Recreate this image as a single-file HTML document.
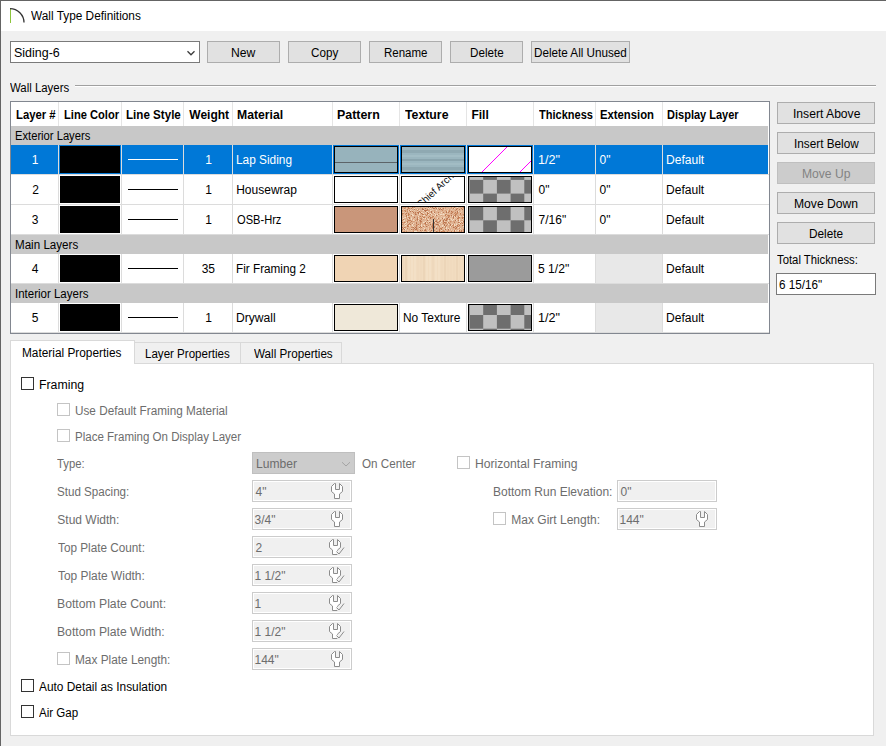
<!DOCTYPE html><html><head><meta charset="utf-8"><style>
*{box-sizing:border-box;margin:0;padding:0}
html,body{width:886px;height:746px;overflow:hidden;background:#f0f0f0;font-family:"Liberation Sans",sans-serif;font-size:12px;color:#000}
.a{position:absolute}
.t{position:absolute;white-space:nowrap;line-height:14px;transform-origin:0 0}
.b{font-weight:bold}
.btn{position:absolute;height:22px;background:#e1e1e1;border:1px solid #adadad}
.btn.dis{background:#cccccc;border-color:#bfbfbf}
.dis{color:#6d6d6d}
.dis2{color:#838383}
.w{color:#fff}
.cb{position:absolute;width:13px;height:13px;border:1px solid #333;background:#fff}
.cbd{position:absolute;width:13px;height:13px;border:1px solid #c4c4c4;background:#fff}
.tb{position:absolute;width:100px;height:22px;border:1px solid #cccccc;background:#f0f0f0;box-shadow:inset 0 0 0 1px #fff}
</style></head><body>
<div class="a" style="left:0px;top:0px;width:886px;height:31px;background:#fff;"></div>
<div class="a" style="left:0px;top:0px;width:886px;height:1px;background:#646464;"></div>
<div class="a" style="left:0px;top:0px;width:1px;height:746px;background:#646464;"></div>
<svg class="a" style="left:0;top:0" width="40" height="30"><line x1="10.5" y1="9" x2="10.5" y2="23" stroke="#8cc43c" stroke-width="1"/><path d="M10 8.6 A14 14 0 0 1 24 22.6" fill="none" stroke="#333" stroke-width="1.3"/></svg>
<div class="t " style="left:30.70px;top:9px;transform:scaleX(0.9865);">Wall Type Definitions</div>
<div class="a" style="left:10px;top:41px;width:190px;height:22px;background:#fff;border:1px solid #7a7a7a"></div>
<div class="t " style="left:14.46px;top:46px;transform:scaleX(1.0395);">Siding-6</div>
<svg class="a" style="left:186px;top:49px" width="12" height="8"><path d="M1.5 2.3 L5 5.8 L8.5 2.3" fill="none" stroke="#3a3a3a" stroke-width="1.25"/></svg>
<div class="btn" style="left:207px;top:41px;width:73px"></div>
<div class="t " style="left:231.19px;top:46px;transform:scaleX(1.0130);">New</div>
<div class="btn" style="left:288px;top:41px;width:73px"></div>
<div class="t " style="left:311.40px;top:46px;transform:scaleX(0.9714);">Copy</div>
<div class="btn" style="left:369px;top:41px;width:73px"></div>
<div class="t " style="left:384.34px;top:46px;transform:scaleX(0.9591);">Rename</div>
<div class="btn" style="left:450px;top:41px;width:73px"></div>
<div class="t " style="left:470.43px;top:46px;transform:scaleX(0.9697);">Delete</div>
<div class="btn" style="left:531px;top:41px;width:99px"></div>
<div class="t " style="left:534.43px;top:46px;transform:scaleX(0.9734);">Delete All Unused</div>
<div class="t " style="left:10.30px;top:81px;transform:scaleX(0.9500);">Wall Layers</div>
<div class="a" style="left:75px;top:85px;width:801px;height:1px;background:#a0a0a0;"></div>
<div class="a" style="left:75px;top:86px;width:801px;height:1px;background:#fff;"></div>
<div class="btn" style="left:777px;top:102px;width:98px"></div>
<div class="t " style="left:793.19px;top:107px;transform:scaleX(1.0108);">Insert Above</div>
<div class="btn" style="left:777px;top:132px;width:98px"></div>
<div class="t " style="left:793.82px;top:137px;transform:scaleX(0.9800);">Insert Below</div>
<div class="btn dis" style="left:777px;top:162px;width:98px"></div>
<div class="t dis2" style="left:802.19px;top:167px;transform:scaleX(1.0085);">Move Up</div>
<div class="btn" style="left:777px;top:192px;width:98px"></div>
<div class="t " style="left:794.29px;top:197px;transform:scaleX(1.0113);">Move Down</div>
<div class="btn" style="left:777px;top:222px;width:98px"></div>
<div class="t " style="left:809.22px;top:227px;transform:scaleX(0.9848);">Delete</div>
<div class="t " style="left:776.90px;top:253px;transform:scaleX(0.9424);">Total Thickness:</div>
<div class="a" style="left:776px;top:273px;width:100px;height:22px;background:#fff;border:1px solid #7a7a7a"></div>
<div class="t " style="left:779.30px;top:278px;transform:scaleX(0.9750);">6 15/16"</div>
<div class="a" style="left:10px;top:101px;width:760px;height:233px;background:#fff;border:1px solid #828790"></div>
<div class="t b" style="left:15.76px;top:108px;transform:scaleX(0.9439);">Layer #</div>
<div class="t b" style="left:63.57px;top:108px;transform:scaleX(0.9276);">Line Color</div>
<div class="t b" style="left:126.13px;top:108px;transform:scaleX(0.9673);">Line Style</div>
<div class="t b" style="left:189.30px;top:108px;">Weight</div>
<div class="t b" style="left:237.28px;top:108px;transform:scaleX(1.0182);">Material</div>
<div class="t b" style="left:336.96px;top:108px;transform:scaleX(1.0350);">Pattern</div>
<div class="t b" style="left:405.00px;top:108px;transform:scaleX(1.0238);">Texture</div>
<div class="t b" style="left:471.40px;top:108px;">Fill</div>
<div class="t b" style="left:538.80px;top:108px;transform:scaleX(0.9190);">Thickness</div>
<div class="t b" style="left:600.36px;top:108px;transform:scaleX(0.9411);">Extension</div>
<div class="t b" style="left:667.38px;top:108px;transform:scaleX(0.9182);">Display Layer</div>
<div class="a" style="left:58px;top:102px;width:1px;height:24px;background:#e5e5e5;"></div>
<div class="a" style="left:121px;top:102px;width:1px;height:24px;background:#e5e5e5;"></div>
<div class="a" style="left:183px;top:102px;width:1px;height:24px;background:#e5e5e5;"></div>
<div class="a" style="left:232px;top:102px;width:1px;height:24px;background:#e5e5e5;"></div>
<div class="a" style="left:332px;top:102px;width:1px;height:24px;background:#e5e5e5;"></div>
<div class="a" style="left:399px;top:102px;width:1px;height:24px;background:#e5e5e5;"></div>
<div class="a" style="left:466px;top:102px;width:1px;height:24px;background:#e5e5e5;"></div>
<div class="a" style="left:533px;top:102px;width:1px;height:24px;background:#e5e5e5;"></div>
<div class="a" style="left:595px;top:102px;width:1px;height:24px;background:#e5e5e5;"></div>
<div class="a" style="left:662px;top:102px;width:1px;height:24px;background:#e5e5e5;"></div>
<div class="a" style="left:11px;top:126px;width:757px;height:19px;background:#c8c8c8;"></div>
<div class="t " style="left:14.57px;top:129px;transform:scaleX(0.9325);">Exterior Layers</div>
<div class="a" style="left:11px;top:145px;width:757px;height:29px;background:#0078d7;"></div>
<div class="t w" style="left:31.70px;top:153px;">1</div>
<div class="a" style="left:60px;top:146px;width:60px;height:27px;background:#000;"></div>
<div class="a" style="left:128px;top:159px;width:50px;height:1px;background:#fff;"></div>
<div class="t w" style="left:205.20px;top:153px;">1</div>
<div class="t w" style="left:236.21px;top:153px;transform:scaleX(0.9873);">Lap Siding</div>
<div class="t w" style="left:537.55px;top:153px;transform:scaleX(1.0500);">1/2"</div>
<div class="t w" style="left:599.50px;top:153px;">0"</div>
<div class="t w" style="left:666.29px;top:153px;transform:scaleX(1.0054);">Default</div>
<div class="a" style="left:334px;top:146px;width:64px;height:27px;background:#000;"></div>
<div class="a" style="left:401px;top:146px;width:64px;height:27px;background:#000;"></div>
<div class="a" style="left:468px;top:146px;width:64px;height:27px;background:#000;"></div>
<div class="a" style="left:335px;top:147px;width:62px;height:25px;background:#97b3bc;"></div>
<div class="a" style="left:335px;top:162px;width:62px;height:1px;background:#5c6468;"></div>
<svg class="a" style="left:402px;top:147px" width="62" height="25"><rect width="62" height="25" fill="#9bb6bf"/><rect y="3" width="62" height="3" fill="#8fa9b2"/><rect y="12" width="62" height="2" fill="#8ba5ae"/><rect y="20" width="62" height="3" fill="#8ea8b1"/><rect y="8" width="62" height="2" fill="#a3bdc5"/><rect y="16" width="62" height="2" fill="#a2bcc4"/></svg>
<svg class="a" style="left:469px;top:147px" width="62" height="25"><rect width="62" height="25" fill="#fff"/><line x1="13" y1="25" x2="38" y2="0" stroke="#ff00ff" stroke-width="1"/><line x1="51" y1="25" x2="62" y2="14" stroke="#ff00ff" stroke-width="1"/></svg>
<div class="a" style="left:58px;top:145px;width:1px;height:30px;background:#dcdcdc;"></div>
<div class="a" style="left:121px;top:145px;width:1px;height:30px;background:#dcdcdc;"></div>
<div class="a" style="left:183px;top:145px;width:1px;height:30px;background:#dcdcdc;"></div>
<div class="a" style="left:232px;top:145px;width:1px;height:30px;background:#dcdcdc;"></div>
<div class="a" style="left:332px;top:145px;width:1px;height:30px;background:#dcdcdc;"></div>
<div class="a" style="left:399px;top:145px;width:1px;height:30px;background:#dcdcdc;"></div>
<div class="a" style="left:466px;top:145px;width:1px;height:30px;background:#dcdcdc;"></div>
<div class="a" style="left:533px;top:145px;width:1px;height:30px;background:#dcdcdc;"></div>
<div class="a" style="left:595px;top:145px;width:1px;height:30px;background:#dcdcdc;"></div>
<div class="a" style="left:662px;top:145px;width:1px;height:30px;background:#dcdcdc;"></div>
<div class="a" style="left:11px;top:174px;width:758px;height:1px;background:#dcdcdc;"></div>
<div class="t " style="left:32.20px;top:183px;">2</div>
<div class="a" style="left:60px;top:176px;width:60px;height:27px;background:#000;"></div>
<div class="a" style="left:128px;top:189px;width:50px;height:1px;background:#000;"></div>
<div class="t " style="left:205.20px;top:183px;">1</div>
<div class="t " style="left:236.20px;top:183px;">Housewrap</div>
<div class="t " style="left:538.60px;top:183px;">0"</div>
<div class="t " style="left:599.50px;top:183px;">0"</div>
<div class="t " style="left:666.29px;top:183px;transform:scaleX(1.0054);">Default</div>
<div class="a" style="left:334px;top:176px;width:64px;height:27px;background:#000;"></div>
<div class="a" style="left:401px;top:176px;width:64px;height:27px;background:#000;"></div>
<div class="a" style="left:468px;top:176px;width:64px;height:27px;background:#000;"></div>
<div class="a" style="left:335px;top:177px;width:62px;height:25px;background:#fff;"></div>
<svg class="a" style="left:402px;top:177px" width="62" height="25"><rect width="62" height="25" fill="#fff"/><text x="0" y="0" transform="translate(18.5 31.5) rotate(-43)" font-family="Liberation Sans" font-size="10" fill="#111">Chief Archit</text></svg>
<svg class="a" style="left:469px;top:177px" width="62" height="25"><rect width="62" height="25" fill="#c0c0c0"/><rect x="-26.90" y="-24.50" width="13.70" height="13.70" fill="#6e6e6e"/><rect x="0.50" y="-24.50" width="13.70" height="13.70" fill="#6e6e6e"/><rect x="27.90" y="-24.50" width="13.70" height="13.70" fill="#6e6e6e"/><rect x="55.30" y="-24.50" width="13.70" height="13.70" fill="#6e6e6e"/><rect x="82.70" y="-24.50" width="13.70" height="13.70" fill="#6e6e6e"/><rect x="-13.20" y="-10.80" width="13.70" height="13.70" fill="#6e6e6e"/><rect x="14.20" y="-10.80" width="13.70" height="13.70" fill="#6e6e6e"/><rect x="41.60" y="-10.80" width="13.70" height="13.70" fill="#6e6e6e"/><rect x="69.00" y="-10.80" width="13.70" height="13.70" fill="#6e6e6e"/><rect x="-26.90" y="2.90" width="13.70" height="13.70" fill="#6e6e6e"/><rect x="0.50" y="2.90" width="13.70" height="13.70" fill="#6e6e6e"/><rect x="27.90" y="2.90" width="13.70" height="13.70" fill="#6e6e6e"/><rect x="55.30" y="2.90" width="13.70" height="13.70" fill="#6e6e6e"/><rect x="82.70" y="2.90" width="13.70" height="13.70" fill="#6e6e6e"/><rect x="-13.20" y="16.60" width="13.70" height="13.70" fill="#6e6e6e"/><rect x="14.20" y="16.60" width="13.70" height="13.70" fill="#6e6e6e"/><rect x="41.60" y="16.60" width="13.70" height="13.70" fill="#6e6e6e"/><rect x="69.00" y="16.60" width="13.70" height="13.70" fill="#6e6e6e"/><rect x="-26.90" y="30.30" width="13.70" height="13.70" fill="#6e6e6e"/><rect x="0.50" y="30.30" width="13.70" height="13.70" fill="#6e6e6e"/><rect x="27.90" y="30.30" width="13.70" height="13.70" fill="#6e6e6e"/><rect x="55.30" y="30.30" width="13.70" height="13.70" fill="#6e6e6e"/><rect x="82.70" y="30.30" width="13.70" height="13.70" fill="#6e6e6e"/><rect x="-13.20" y="44.00" width="13.70" height="13.70" fill="#6e6e6e"/><rect x="14.20" y="44.00" width="13.70" height="13.70" fill="#6e6e6e"/><rect x="41.60" y="44.00" width="13.70" height="13.70" fill="#6e6e6e"/><rect x="69.00" y="44.00" width="13.70" height="13.70" fill="#6e6e6e"/><rect x="-26.90" y="57.70" width="13.70" height="13.70" fill="#6e6e6e"/><rect x="0.50" y="57.70" width="13.70" height="13.70" fill="#6e6e6e"/><rect x="27.90" y="57.70" width="13.70" height="13.70" fill="#6e6e6e"/><rect x="55.30" y="57.70" width="13.70" height="13.70" fill="#6e6e6e"/><rect x="82.70" y="57.70" width="13.70" height="13.70" fill="#6e6e6e"/></svg>
<div class="a" style="left:58px;top:175px;width:1px;height:30px;background:#dcdcdc;"></div>
<div class="a" style="left:121px;top:175px;width:1px;height:30px;background:#dcdcdc;"></div>
<div class="a" style="left:183px;top:175px;width:1px;height:30px;background:#dcdcdc;"></div>
<div class="a" style="left:232px;top:175px;width:1px;height:30px;background:#dcdcdc;"></div>
<div class="a" style="left:332px;top:175px;width:1px;height:30px;background:#dcdcdc;"></div>
<div class="a" style="left:399px;top:175px;width:1px;height:30px;background:#dcdcdc;"></div>
<div class="a" style="left:466px;top:175px;width:1px;height:30px;background:#dcdcdc;"></div>
<div class="a" style="left:533px;top:175px;width:1px;height:30px;background:#dcdcdc;"></div>
<div class="a" style="left:595px;top:175px;width:1px;height:30px;background:#dcdcdc;"></div>
<div class="a" style="left:662px;top:175px;width:1px;height:30px;background:#dcdcdc;"></div>
<div class="a" style="left:11px;top:204px;width:758px;height:1px;background:#dcdcdc;"></div>
<div class="t " style="left:31.70px;top:213px;">3</div>
<div class="a" style="left:60px;top:206px;width:60px;height:27px;background:#000;"></div>
<div class="a" style="left:128px;top:219px;width:50px;height:1px;background:#000;"></div>
<div class="t " style="left:205.20px;top:213px;">1</div>
<div class="t " style="left:237.20px;top:213px;transform:scaleX(0.9250);">OSB-Hrz</div>
<div class="t " style="left:538.60px;top:213px;">7/16"</div>
<div class="t " style="left:599.50px;top:213px;">0"</div>
<div class="t " style="left:666.29px;top:213px;transform:scaleX(1.0054);">Default</div>
<div class="a" style="left:334px;top:206px;width:64px;height:27px;background:#000;"></div>
<div class="a" style="left:401px;top:206px;width:64px;height:27px;background:#000;"></div>
<div class="a" style="left:468px;top:206px;width:64px;height:27px;background:#000;"></div>
<div class="a" style="left:335px;top:207px;width:62px;height:25px;background:#c9967a;"></div>
<svg class="a" style="left:402px;top:207px" width="62" height="25"><rect width="62" height="25" fill="#dfb393"/><rect x="0" y="0" width="1" height="1" fill="#d8a07c"/><rect x="1" y="0" width="1" height="1" fill="#d8a07c"/><rect x="2" y="0" width="1" height="1" fill="#d8a07c"/><rect x="3" y="0" width="1" height="1" fill="#cc8c64"/><rect x="5" y="0" width="1" height="1" fill="#d8a07c"/><rect x="6" y="0" width="1" height="1" fill="#b87250"/><rect x="7" y="0" width="1" height="1" fill="#e6bc9c"/><rect x="9" y="0" width="1" height="1" fill="#e6bc9c"/><rect x="10" y="0" width="1" height="1" fill="#b87250"/><rect x="11" y="0" width="1" height="1" fill="#d8a07c"/><rect x="12" y="0" width="1" height="1" fill="#cc8c64"/><rect x="14" y="0" width="1" height="1" fill="#e6bc9c"/><rect x="16" y="0" width="1" height="1" fill="#e6bc9c"/><rect x="17" y="0" width="1" height="1" fill="#e6bc9c"/><rect x="18" y="0" width="1" height="1" fill="#d8a07c"/><rect x="23" y="0" width="1" height="1" fill="#e6bc9c"/><rect x="26" y="0" width="1" height="1" fill="#c27c54"/><rect x="27" y="0" width="1" height="1" fill="#ebcaac"/><rect x="28" y="0" width="1" height="1" fill="#c27c54"/><rect x="30" y="0" width="1" height="1" fill="#b87250"/><rect x="32" y="0" width="1" height="1" fill="#e6bc9c"/><rect x="33" y="0" width="1" height="1" fill="#c27c54"/><rect x="35" y="0" width="1" height="1" fill="#ebcaac"/><rect x="42" y="0" width="1" height="1" fill="#e6bc9c"/><rect x="43" y="0" width="1" height="1" fill="#d8a07c"/><rect x="47" y="0" width="1" height="1" fill="#e6bc9c"/><rect x="49" y="0" width="1" height="1" fill="#cc8c64"/><rect x="50" y="0" width="1" height="1" fill="#e6bc9c"/><rect x="52" y="0" width="1" height="1" fill="#c27c54"/><rect x="54" y="0" width="1" height="1" fill="#ebcaac"/><rect x="55" y="0" width="1" height="1" fill="#f2dcc4"/><rect x="58" y="0" width="1" height="1" fill="#d8a07c"/><rect x="60" y="0" width="1" height="1" fill="#d8a07c"/><rect x="61" y="0" width="1" height="1" fill="#c27c54"/><rect x="2" y="1" width="1" height="1" fill="#cc8c64"/><rect x="3" y="1" width="1" height="1" fill="#d8a07c"/><rect x="4" y="1" width="1" height="1" fill="#ebcaac"/><rect x="6" y="1" width="1" height="1" fill="#c27c54"/><rect x="7" y="1" width="1" height="1" fill="#cc8c64"/><rect x="9" y="1" width="1" height="1" fill="#c27c54"/><rect x="12" y="1" width="1" height="1" fill="#f2dcc4"/><rect x="14" y="1" width="1" height="1" fill="#e6bc9c"/><rect x="20" y="1" width="1" height="1" fill="#b87250"/><rect x="23" y="1" width="1" height="1" fill="#c27c54"/><rect x="26" y="1" width="1" height="1" fill="#f2dcc4"/><rect x="28" y="1" width="1" height="1" fill="#f2dcc4"/><rect x="31" y="1" width="1" height="1" fill="#b87250"/><rect x="32" y="1" width="1" height="1" fill="#c27c54"/><rect x="34" y="1" width="1" height="1" fill="#b87250"/><rect x="35" y="1" width="1" height="1" fill="#f2dcc4"/><rect x="36" y="1" width="1" height="1" fill="#cc8c64"/><rect x="38" y="1" width="1" height="1" fill="#c27c54"/><rect x="39" y="1" width="1" height="1" fill="#f2dcc4"/><rect x="40" y="1" width="1" height="1" fill="#d8a07c"/><rect x="41" y="1" width="1" height="1" fill="#c27c54"/><rect x="42" y="1" width="1" height="1" fill="#e6bc9c"/><rect x="43" y="1" width="1" height="1" fill="#d8a07c"/><rect x="44" y="1" width="1" height="1" fill="#e6bc9c"/><rect x="45" y="1" width="1" height="1" fill="#e6bc9c"/><rect x="49" y="1" width="1" height="1" fill="#d8a07c"/><rect x="50" y="1" width="1" height="1" fill="#e6bc9c"/><rect x="51" y="1" width="1" height="1" fill="#c27c54"/><rect x="52" y="1" width="1" height="1" fill="#f2dcc4"/><rect x="54" y="1" width="1" height="1" fill="#d8a07c"/><rect x="55" y="1" width="1" height="1" fill="#c27c54"/><rect x="57" y="1" width="1" height="1" fill="#e6bc9c"/><rect x="59" y="1" width="1" height="1" fill="#c27c54"/><rect x="61" y="1" width="1" height="1" fill="#d8a07c"/><rect x="0" y="2" width="1" height="1" fill="#ebcaac"/><rect x="2" y="2" width="1" height="1" fill="#ebcaac"/><rect x="3" y="2" width="1" height="1" fill="#e6bc9c"/><rect x="5" y="2" width="1" height="1" fill="#c27c54"/><rect x="6" y="2" width="1" height="1" fill="#e6bc9c"/><rect x="9" y="2" width="1" height="1" fill="#ebcaac"/><rect x="10" y="2" width="1" height="1" fill="#d8a07c"/><rect x="12" y="2" width="1" height="1" fill="#c27c54"/><rect x="14" y="2" width="1" height="1" fill="#d8a07c"/><rect x="15" y="2" width="1" height="1" fill="#f2dcc4"/><rect x="16" y="2" width="1" height="1" fill="#cc8c64"/><rect x="17" y="2" width="1" height="1" fill="#e6bc9c"/><rect x="20" y="2" width="1" height="1" fill="#b87250"/><rect x="21" y="2" width="1" height="1" fill="#b87250"/><rect x="22" y="2" width="1" height="1" fill="#e6bc9c"/><rect x="25" y="2" width="1" height="1" fill="#c27c54"/><rect x="30" y="2" width="1" height="1" fill="#ebcaac"/><rect x="31" y="2" width="1" height="1" fill="#e6bc9c"/><rect x="37" y="2" width="1" height="1" fill="#b87250"/><rect x="38" y="2" width="1" height="1" fill="#d8a07c"/><rect x="39" y="2" width="1" height="1" fill="#b87250"/><rect x="40" y="2" width="1" height="1" fill="#d8a07c"/><rect x="41" y="2" width="1" height="1" fill="#d8a07c"/><rect x="42" y="2" width="1" height="1" fill="#ebcaac"/><rect x="43" y="2" width="1" height="1" fill="#e6bc9c"/><rect x="46" y="2" width="1" height="1" fill="#ebcaac"/><rect x="47" y="2" width="1" height="1" fill="#d8a07c"/><rect x="49" y="2" width="1" height="1" fill="#ebcaac"/><rect x="54" y="2" width="1" height="1" fill="#b87250"/><rect x="56" y="2" width="1" height="1" fill="#e6bc9c"/><rect x="57" y="2" width="1" height="1" fill="#c27c54"/><rect x="60" y="2" width="1" height="1" fill="#c27c54"/><rect x="0" y="3" width="1" height="1" fill="#cc8c64"/><rect x="2" y="3" width="1" height="1" fill="#cc8c64"/><rect x="3" y="3" width="1" height="1" fill="#cc8c64"/><rect x="5" y="3" width="1" height="1" fill="#d8a07c"/><rect x="6" y="3" width="1" height="1" fill="#ebcaac"/><rect x="7" y="3" width="1" height="1" fill="#c27c54"/><rect x="8" y="3" width="1" height="1" fill="#f2dcc4"/><rect x="10" y="3" width="1" height="1" fill="#ebcaac"/><rect x="12" y="3" width="1" height="1" fill="#ebcaac"/><rect x="15" y="3" width="1" height="1" fill="#cc8c64"/><rect x="17" y="3" width="1" height="1" fill="#f2dcc4"/><rect x="20" y="3" width="1" height="1" fill="#e6bc9c"/><rect x="21" y="3" width="1" height="1" fill="#f2dcc4"/><rect x="22" y="3" width="1" height="1" fill="#b87250"/><rect x="23" y="3" width="1" height="1" fill="#b87250"/><rect x="24" y="3" width="1" height="1" fill="#b87250"/><rect x="25" y="3" width="1" height="1" fill="#cc8c64"/><rect x="26" y="3" width="1" height="1" fill="#d8a07c"/><rect x="27" y="3" width="1" height="1" fill="#d8a07c"/><rect x="28" y="3" width="1" height="1" fill="#f2dcc4"/><rect x="29" y="3" width="1" height="1" fill="#ebcaac"/><rect x="32" y="3" width="1" height="1" fill="#d8a07c"/><rect x="34" y="3" width="1" height="1" fill="#f2dcc4"/><rect x="40" y="3" width="1" height="1" fill="#cc8c64"/><rect x="43" y="3" width="1" height="1" fill="#d8a07c"/><rect x="45" y="3" width="1" height="1" fill="#ebcaac"/><rect x="47" y="3" width="1" height="1" fill="#cc8c64"/><rect x="50" y="3" width="1" height="1" fill="#e6bc9c"/><rect x="51" y="3" width="1" height="1" fill="#e6bc9c"/><rect x="53" y="3" width="1" height="1" fill="#cc8c64"/><rect x="59" y="3" width="1" height="1" fill="#e6bc9c"/><rect x="0" y="4" width="1" height="1" fill="#d8a07c"/><rect x="3" y="4" width="1" height="1" fill="#c27c54"/><rect x="5" y="4" width="1" height="1" fill="#cc8c64"/><rect x="6" y="4" width="1" height="1" fill="#ebcaac"/><rect x="8" y="4" width="1" height="1" fill="#b87250"/><rect x="10" y="4" width="1" height="1" fill="#c27c54"/><rect x="15" y="4" width="1" height="1" fill="#ebcaac"/><rect x="17" y="4" width="1" height="1" fill="#b87250"/><rect x="19" y="4" width="1" height="1" fill="#d8a07c"/><rect x="23" y="4" width="1" height="1" fill="#b87250"/><rect x="24" y="4" width="1" height="1" fill="#ebcaac"/><rect x="25" y="4" width="1" height="1" fill="#f2dcc4"/><rect x="29" y="4" width="1" height="1" fill="#b87250"/><rect x="31" y="4" width="1" height="1" fill="#e6bc9c"/><rect x="32" y="4" width="1" height="1" fill="#d8a07c"/><rect x="44" y="4" width="1" height="1" fill="#c27c54"/><rect x="45" y="4" width="1" height="1" fill="#f2dcc4"/><rect x="46" y="4" width="1" height="1" fill="#d8a07c"/><rect x="47" y="4" width="1" height="1" fill="#c27c54"/><rect x="48" y="4" width="1" height="1" fill="#e6bc9c"/><rect x="49" y="4" width="1" height="1" fill="#b87250"/><rect x="50" y="4" width="1" height="1" fill="#d8a07c"/><rect x="51" y="4" width="1" height="1" fill="#d8a07c"/><rect x="55" y="4" width="1" height="1" fill="#b87250"/><rect x="56" y="4" width="1" height="1" fill="#f2dcc4"/><rect x="59" y="4" width="1" height="1" fill="#ebcaac"/><rect x="1" y="5" width="1" height="1" fill="#ebcaac"/><rect x="3" y="5" width="1" height="1" fill="#ebcaac"/><rect x="5" y="5" width="1" height="1" fill="#d8a07c"/><rect x="9" y="5" width="1" height="1" fill="#e6bc9c"/><rect x="10" y="5" width="1" height="1" fill="#ebcaac"/><rect x="11" y="5" width="1" height="1" fill="#b87250"/><rect x="13" y="5" width="1" height="1" fill="#c27c54"/><rect x="15" y="5" width="1" height="1" fill="#c27c54"/><rect x="16" y="5" width="1" height="1" fill="#b87250"/><rect x="18" y="5" width="1" height="1" fill="#c27c54"/><rect x="19" y="5" width="1" height="1" fill="#f2dcc4"/><rect x="20" y="5" width="1" height="1" fill="#ebcaac"/><rect x="23" y="5" width="1" height="1" fill="#ebcaac"/><rect x="25" y="5" width="1" height="1" fill="#c27c54"/><rect x="26" y="5" width="1" height="1" fill="#f2dcc4"/><rect x="27" y="5" width="1" height="1" fill="#d8a07c"/><rect x="29" y="5" width="1" height="1" fill="#b87250"/><rect x="30" y="5" width="1" height="1" fill="#e6bc9c"/><rect x="31" y="5" width="1" height="1" fill="#f2dcc4"/><rect x="32" y="5" width="1" height="1" fill="#b87250"/><rect x="36" y="5" width="1" height="1" fill="#c27c54"/><rect x="39" y="5" width="1" height="1" fill="#f2dcc4"/><rect x="41" y="5" width="1" height="1" fill="#c27c54"/><rect x="44" y="5" width="1" height="1" fill="#b87250"/><rect x="46" y="5" width="1" height="1" fill="#c27c54"/><rect x="49" y="5" width="1" height="1" fill="#d8a07c"/><rect x="50" y="5" width="1" height="1" fill="#c27c54"/><rect x="53" y="5" width="1" height="1" fill="#c27c54"/><rect x="55" y="5" width="1" height="1" fill="#c27c54"/><rect x="58" y="5" width="1" height="1" fill="#ebcaac"/><rect x="0" y="6" width="1" height="1" fill="#c27c54"/><rect x="1" y="6" width="1" height="1" fill="#cc8c64"/><rect x="3" y="6" width="1" height="1" fill="#d8a07c"/><rect x="4" y="6" width="1" height="1" fill="#b87250"/><rect x="6" y="6" width="1" height="1" fill="#c27c54"/><rect x="8" y="6" width="1" height="1" fill="#e6bc9c"/><rect x="10" y="6" width="1" height="1" fill="#e6bc9c"/><rect x="12" y="6" width="1" height="1" fill="#d8a07c"/><rect x="13" y="6" width="1" height="1" fill="#cc8c64"/><rect x="16" y="6" width="1" height="1" fill="#b87250"/><rect x="17" y="6" width="1" height="1" fill="#f2dcc4"/><rect x="19" y="6" width="1" height="1" fill="#b87250"/><rect x="20" y="6" width="1" height="1" fill="#d8a07c"/><rect x="21" y="6" width="1" height="1" fill="#f2dcc4"/><rect x="24" y="6" width="1" height="1" fill="#ebcaac"/><rect x="25" y="6" width="1" height="1" fill="#c27c54"/><rect x="26" y="6" width="1" height="1" fill="#c27c54"/><rect x="27" y="6" width="1" height="1" fill="#e6bc9c"/><rect x="28" y="6" width="1" height="1" fill="#f2dcc4"/><rect x="30" y="6" width="1" height="1" fill="#d8a07c"/><rect x="32" y="6" width="1" height="1" fill="#f2dcc4"/><rect x="35" y="6" width="1" height="1" fill="#e6bc9c"/><rect x="37" y="6" width="1" height="1" fill="#ebcaac"/><rect x="39" y="6" width="1" height="1" fill="#e6bc9c"/><rect x="41" y="6" width="1" height="1" fill="#ebcaac"/><rect x="43" y="6" width="1" height="1" fill="#ebcaac"/><rect x="45" y="6" width="1" height="1" fill="#e6bc9c"/><rect x="48" y="6" width="1" height="1" fill="#d8a07c"/><rect x="49" y="6" width="1" height="1" fill="#b87250"/><rect x="51" y="6" width="1" height="1" fill="#e6bc9c"/><rect x="52" y="6" width="1" height="1" fill="#cc8c64"/><rect x="53" y="6" width="1" height="1" fill="#d8a07c"/><rect x="54" y="6" width="1" height="1" fill="#cc8c64"/><rect x="55" y="6" width="1" height="1" fill="#cc8c64"/><rect x="57" y="6" width="1" height="1" fill="#e6bc9c"/><rect x="58" y="6" width="1" height="1" fill="#b87250"/><rect x="59" y="6" width="1" height="1" fill="#e6bc9c"/><rect x="0" y="7" width="1" height="1" fill="#cc8c64"/><rect x="2" y="7" width="1" height="1" fill="#e6bc9c"/><rect x="3" y="7" width="1" height="1" fill="#cc8c64"/><rect x="5" y="7" width="1" height="1" fill="#e6bc9c"/><rect x="6" y="7" width="1" height="1" fill="#c27c54"/><rect x="7" y="7" width="1" height="1" fill="#cc8c64"/><rect x="8" y="7" width="1" height="1" fill="#e6bc9c"/><rect x="9" y="7" width="1" height="1" fill="#ebcaac"/><rect x="10" y="7" width="1" height="1" fill="#f2dcc4"/><rect x="13" y="7" width="1" height="1" fill="#b87250"/><rect x="14" y="7" width="1" height="1" fill="#cc8c64"/><rect x="15" y="7" width="1" height="1" fill="#e6bc9c"/><rect x="17" y="7" width="1" height="1" fill="#f2dcc4"/><rect x="20" y="7" width="1" height="1" fill="#c27c54"/><rect x="21" y="7" width="1" height="1" fill="#c27c54"/><rect x="23" y="7" width="1" height="1" fill="#cc8c64"/><rect x="25" y="7" width="1" height="1" fill="#c27c54"/><rect x="26" y="7" width="1" height="1" fill="#f2dcc4"/><rect x="28" y="7" width="1" height="1" fill="#cc8c64"/><rect x="29" y="7" width="1" height="1" fill="#f2dcc4"/><rect x="32" y="7" width="1" height="1" fill="#d8a07c"/><rect x="33" y="7" width="1" height="1" fill="#f2dcc4"/><rect x="34" y="7" width="1" height="1" fill="#e6bc9c"/><rect x="35" y="7" width="1" height="1" fill="#f2dcc4"/><rect x="36" y="7" width="1" height="1" fill="#cc8c64"/><rect x="38" y="7" width="1" height="1" fill="#f2dcc4"/><rect x="39" y="7" width="1" height="1" fill="#f2dcc4"/><rect x="40" y="7" width="1" height="1" fill="#ebcaac"/><rect x="41" y="7" width="1" height="1" fill="#f2dcc4"/><rect x="42" y="7" width="1" height="1" fill="#ebcaac"/><rect x="43" y="7" width="1" height="1" fill="#cc8c64"/><rect x="44" y="7" width="1" height="1" fill="#cc8c64"/><rect x="47" y="7" width="1" height="1" fill="#e6bc9c"/><rect x="51" y="7" width="1" height="1" fill="#d8a07c"/><rect x="52" y="7" width="1" height="1" fill="#e6bc9c"/><rect x="53" y="7" width="1" height="1" fill="#c27c54"/><rect x="54" y="7" width="1" height="1" fill="#cc8c64"/><rect x="58" y="7" width="1" height="1" fill="#cc8c64"/><rect x="60" y="7" width="1" height="1" fill="#d8a07c"/><rect x="61" y="7" width="1" height="1" fill="#cc8c64"/><rect x="0" y="8" width="1" height="1" fill="#d8a07c"/><rect x="2" y="8" width="1" height="1" fill="#e6bc9c"/><rect x="3" y="8" width="1" height="1" fill="#e6bc9c"/><rect x="4" y="8" width="1" height="1" fill="#c27c54"/><rect x="6" y="8" width="1" height="1" fill="#c27c54"/><rect x="9" y="8" width="1" height="1" fill="#c27c54"/><rect x="10" y="8" width="1" height="1" fill="#f2dcc4"/><rect x="11" y="8" width="1" height="1" fill="#f2dcc4"/><rect x="15" y="8" width="1" height="1" fill="#e6bc9c"/><rect x="21" y="8" width="1" height="1" fill="#f2dcc4"/><rect x="22" y="8" width="1" height="1" fill="#f2dcc4"/><rect x="24" y="8" width="1" height="1" fill="#c27c54"/><rect x="31" y="8" width="1" height="1" fill="#ebcaac"/><rect x="33" y="8" width="1" height="1" fill="#f2dcc4"/><rect x="34" y="8" width="1" height="1" fill="#b87250"/><rect x="36" y="8" width="1" height="1" fill="#ebcaac"/><rect x="39" y="8" width="1" height="1" fill="#d8a07c"/><rect x="41" y="8" width="1" height="1" fill="#e6bc9c"/><rect x="43" y="8" width="1" height="1" fill="#c27c54"/><rect x="44" y="8" width="1" height="1" fill="#ebcaac"/><rect x="45" y="8" width="1" height="1" fill="#cc8c64"/><rect x="46" y="8" width="1" height="1" fill="#c27c54"/><rect x="47" y="8" width="1" height="1" fill="#cc8c64"/><rect x="49" y="8" width="1" height="1" fill="#b87250"/><rect x="50" y="8" width="1" height="1" fill="#ebcaac"/><rect x="52" y="8" width="1" height="1" fill="#cc8c64"/><rect x="53" y="8" width="1" height="1" fill="#c27c54"/><rect x="55" y="8" width="1" height="1" fill="#d8a07c"/><rect x="59" y="8" width="1" height="1" fill="#d8a07c"/><rect x="61" y="8" width="1" height="1" fill="#d8a07c"/><rect x="0" y="9" width="1" height="1" fill="#e6bc9c"/><rect x="4" y="9" width="1" height="1" fill="#c27c54"/><rect x="5" y="9" width="1" height="1" fill="#f2dcc4"/><rect x="6" y="9" width="1" height="1" fill="#e6bc9c"/><rect x="12" y="9" width="1" height="1" fill="#d8a07c"/><rect x="15" y="9" width="1" height="1" fill="#d8a07c"/><rect x="16" y="9" width="1" height="1" fill="#f2dcc4"/><rect x="17" y="9" width="1" height="1" fill="#d8a07c"/><rect x="18" y="9" width="1" height="1" fill="#c27c54"/><rect x="20" y="9" width="1" height="1" fill="#c27c54"/><rect x="21" y="9" width="1" height="1" fill="#e6bc9c"/><rect x="22" y="9" width="1" height="1" fill="#d8a07c"/><rect x="24" y="9" width="1" height="1" fill="#e6bc9c"/><rect x="27" y="9" width="1" height="1" fill="#c27c54"/><rect x="29" y="9" width="1" height="1" fill="#ebcaac"/><rect x="30" y="9" width="1" height="1" fill="#cc8c64"/><rect x="31" y="9" width="1" height="1" fill="#c27c54"/><rect x="32" y="9" width="1" height="1" fill="#ebcaac"/><rect x="39" y="9" width="1" height="1" fill="#ebcaac"/><rect x="42" y="9" width="1" height="1" fill="#e6bc9c"/><rect x="44" y="9" width="1" height="1" fill="#d8a07c"/><rect x="46" y="9" width="1" height="1" fill="#cc8c64"/><rect x="47" y="9" width="1" height="1" fill="#cc8c64"/><rect x="48" y="9" width="1" height="1" fill="#ebcaac"/><rect x="49" y="9" width="1" height="1" fill="#d8a07c"/><rect x="50" y="9" width="1" height="1" fill="#f2dcc4"/><rect x="51" y="9" width="1" height="1" fill="#b87250"/><rect x="52" y="9" width="1" height="1" fill="#f2dcc4"/><rect x="53" y="9" width="1" height="1" fill="#c27c54"/><rect x="54" y="9" width="1" height="1" fill="#ebcaac"/><rect x="56" y="9" width="1" height="1" fill="#cc8c64"/><rect x="57" y="9" width="1" height="1" fill="#f2dcc4"/><rect x="58" y="9" width="1" height="1" fill="#ebcaac"/><rect x="59" y="9" width="1" height="1" fill="#e6bc9c"/><rect x="61" y="9" width="1" height="1" fill="#f2dcc4"/><rect x="2" y="10" width="1" height="1" fill="#ebcaac"/><rect x="3" y="10" width="1" height="1" fill="#f2dcc4"/><rect x="4" y="10" width="1" height="1" fill="#d8a07c"/><rect x="5" y="10" width="1" height="1" fill="#e6bc9c"/><rect x="6" y="10" width="1" height="1" fill="#cc8c64"/><rect x="7" y="10" width="1" height="1" fill="#c27c54"/><rect x="9" y="10" width="1" height="1" fill="#ebcaac"/><rect x="12" y="10" width="1" height="1" fill="#b87250"/><rect x="15" y="10" width="1" height="1" fill="#cc8c64"/><rect x="16" y="10" width="1" height="1" fill="#e6bc9c"/><rect x="18" y="10" width="1" height="1" fill="#e6bc9c"/><rect x="19" y="10" width="1" height="1" fill="#d8a07c"/><rect x="20" y="10" width="1" height="1" fill="#ebcaac"/><rect x="21" y="10" width="1" height="1" fill="#c27c54"/><rect x="22" y="10" width="1" height="1" fill="#c27c54"/><rect x="26" y="10" width="1" height="1" fill="#c27c54"/><rect x="27" y="10" width="1" height="1" fill="#e6bc9c"/><rect x="28" y="10" width="1" height="1" fill="#b87250"/><rect x="29" y="10" width="1" height="1" fill="#cc8c64"/><rect x="30" y="10" width="1" height="1" fill="#cc8c64"/><rect x="35" y="10" width="1" height="1" fill="#ebcaac"/><rect x="38" y="10" width="1" height="1" fill="#e6bc9c"/><rect x="41" y="10" width="1" height="1" fill="#ebcaac"/><rect x="42" y="10" width="1" height="1" fill="#f2dcc4"/><rect x="46" y="10" width="1" height="1" fill="#b87250"/><rect x="51" y="10" width="1" height="1" fill="#b87250"/><rect x="52" y="10" width="1" height="1" fill="#ebcaac"/><rect x="53" y="10" width="1" height="1" fill="#ebcaac"/><rect x="56" y="10" width="1" height="1" fill="#c27c54"/><rect x="57" y="10" width="1" height="1" fill="#c27c54"/><rect x="59" y="10" width="1" height="1" fill="#d8a07c"/><rect x="60" y="10" width="1" height="1" fill="#c27c54"/><rect x="61" y="10" width="1" height="1" fill="#cc8c64"/><rect x="0" y="11" width="1" height="1" fill="#e6bc9c"/><rect x="1" y="11" width="1" height="1" fill="#f2dcc4"/><rect x="4" y="11" width="1" height="1" fill="#d8a07c"/><rect x="6" y="11" width="1" height="1" fill="#ebcaac"/><rect x="7" y="11" width="1" height="1" fill="#b87250"/><rect x="9" y="11" width="1" height="1" fill="#f2dcc4"/><rect x="11" y="11" width="1" height="1" fill="#d8a07c"/><rect x="12" y="11" width="1" height="1" fill="#e6bc9c"/><rect x="15" y="11" width="1" height="1" fill="#c27c54"/><rect x="16" y="11" width="1" height="1" fill="#f2dcc4"/><rect x="18" y="11" width="1" height="1" fill="#cc8c64"/><rect x="19" y="11" width="1" height="1" fill="#cc8c64"/><rect x="21" y="11" width="1" height="1" fill="#f2dcc4"/><rect x="23" y="11" width="1" height="1" fill="#f2dcc4"/><rect x="24" y="11" width="1" height="1" fill="#cc8c64"/><rect x="25" y="11" width="1" height="1" fill="#ebcaac"/><rect x="28" y="11" width="1" height="1" fill="#b87250"/><rect x="32" y="11" width="1" height="1" fill="#c27c54"/><rect x="35" y="11" width="1" height="1" fill="#f2dcc4"/><rect x="36" y="11" width="1" height="1" fill="#c27c54"/><rect x="38" y="11" width="1" height="1" fill="#ebcaac"/><rect x="39" y="11" width="1" height="1" fill="#ebcaac"/><rect x="40" y="11" width="1" height="1" fill="#b87250"/><rect x="41" y="11" width="1" height="1" fill="#f2dcc4"/><rect x="44" y="11" width="1" height="1" fill="#cc8c64"/><rect x="45" y="11" width="1" height="1" fill="#b87250"/><rect x="46" y="11" width="1" height="1" fill="#ebcaac"/><rect x="48" y="11" width="1" height="1" fill="#ebcaac"/><rect x="49" y="11" width="1" height="1" fill="#ebcaac"/><rect x="51" y="11" width="1" height="1" fill="#cc8c64"/><rect x="52" y="11" width="1" height="1" fill="#ebcaac"/><rect x="54" y="11" width="1" height="1" fill="#ebcaac"/><rect x="55" y="11" width="1" height="1" fill="#c27c54"/><rect x="56" y="11" width="1" height="1" fill="#c27c54"/><rect x="60" y="11" width="1" height="1" fill="#c27c54"/><rect x="1" y="12" width="1" height="1" fill="#c27c54"/><rect x="4" y="12" width="1" height="1" fill="#e6bc9c"/><rect x="5" y="12" width="1" height="1" fill="#cc8c64"/><rect x="9" y="12" width="1" height="1" fill="#f2dcc4"/><rect x="10" y="12" width="1" height="1" fill="#d8a07c"/><rect x="11" y="12" width="1" height="1" fill="#ebcaac"/><rect x="14" y="12" width="1" height="1" fill="#d8a07c"/><rect x="15" y="12" width="1" height="1" fill="#b87250"/><rect x="17" y="12" width="1" height="1" fill="#e6bc9c"/><rect x="19" y="12" width="1" height="1" fill="#c27c54"/><rect x="21" y="12" width="1" height="1" fill="#d8a07c"/><rect x="23" y="12" width="1" height="1" fill="#e6bc9c"/><rect x="24" y="12" width="1" height="1" fill="#d8a07c"/><rect x="25" y="12" width="1" height="1" fill="#e6bc9c"/><rect x="26" y="12" width="1" height="1" fill="#f2dcc4"/><rect x="31" y="12" width="1" height="1" fill="#d8a07c"/><rect x="33" y="12" width="1" height="1" fill="#d8a07c"/><rect x="35" y="12" width="1" height="1" fill="#d8a07c"/><rect x="42" y="12" width="1" height="1" fill="#b87250"/><rect x="44" y="12" width="1" height="1" fill="#c27c54"/><rect x="45" y="12" width="1" height="1" fill="#cc8c64"/><rect x="47" y="12" width="1" height="1" fill="#c27c54"/><rect x="49" y="12" width="1" height="1" fill="#f2dcc4"/><rect x="51" y="12" width="1" height="1" fill="#f2dcc4"/><rect x="52" y="12" width="1" height="1" fill="#e6bc9c"/><rect x="56" y="12" width="1" height="1" fill="#d8a07c"/><rect x="57" y="12" width="1" height="1" fill="#f2dcc4"/><rect x="58" y="12" width="1" height="1" fill="#e6bc9c"/><rect x="60" y="12" width="1" height="1" fill="#ebcaac"/><rect x="0" y="13" width="1" height="1" fill="#cc8c64"/><rect x="1" y="13" width="1" height="1" fill="#ebcaac"/><rect x="2" y="13" width="1" height="1" fill="#f2dcc4"/><rect x="4" y="13" width="1" height="1" fill="#e6bc9c"/><rect x="5" y="13" width="1" height="1" fill="#d8a07c"/><rect x="6" y="13" width="1" height="1" fill="#c27c54"/><rect x="7" y="13" width="1" height="1" fill="#c27c54"/><rect x="8" y="13" width="1" height="1" fill="#c27c54"/><rect x="11" y="13" width="1" height="1" fill="#f2dcc4"/><rect x="12" y="13" width="1" height="1" fill="#ebcaac"/><rect x="13" y="13" width="1" height="1" fill="#cc8c64"/><rect x="15" y="13" width="1" height="1" fill="#cc8c64"/><rect x="16" y="13" width="1" height="1" fill="#f2dcc4"/><rect x="17" y="13" width="1" height="1" fill="#cc8c64"/><rect x="18" y="13" width="1" height="1" fill="#b87250"/><rect x="25" y="13" width="1" height="1" fill="#b87250"/><rect x="29" y="13" width="1" height="1" fill="#ebcaac"/><rect x="31" y="13" width="1" height="1" fill="#ebcaac"/><rect x="32" y="13" width="1" height="1" fill="#ebcaac"/><rect x="34" y="13" width="1" height="1" fill="#cc8c64"/><rect x="36" y="13" width="1" height="1" fill="#f2dcc4"/><rect x="38" y="13" width="1" height="1" fill="#c27c54"/><rect x="39" y="13" width="1" height="1" fill="#ebcaac"/><rect x="41" y="13" width="1" height="1" fill="#b87250"/><rect x="43" y="13" width="1" height="1" fill="#c27c54"/><rect x="44" y="13" width="1" height="1" fill="#b87250"/><rect x="46" y="13" width="1" height="1" fill="#f2dcc4"/><rect x="49" y="13" width="1" height="1" fill="#e6bc9c"/><rect x="50" y="13" width="1" height="1" fill="#f2dcc4"/><rect x="53" y="13" width="1" height="1" fill="#b87250"/><rect x="54" y="13" width="1" height="1" fill="#f2dcc4"/><rect x="56" y="13" width="1" height="1" fill="#c27c54"/><rect x="57" y="13" width="1" height="1" fill="#f2dcc4"/><rect x="59" y="13" width="1" height="1" fill="#d8a07c"/><rect x="60" y="13" width="1" height="1" fill="#d8a07c"/><rect x="1" y="14" width="1" height="1" fill="#ebcaac"/><rect x="5" y="14" width="1" height="1" fill="#c27c54"/><rect x="9" y="14" width="1" height="1" fill="#c27c54"/><rect x="10" y="14" width="1" height="1" fill="#d8a07c"/><rect x="11" y="14" width="1" height="1" fill="#d8a07c"/><rect x="12" y="14" width="1" height="1" fill="#d8a07c"/><rect x="13" y="14" width="1" height="1" fill="#e6bc9c"/><rect x="18" y="14" width="1" height="1" fill="#b87250"/><rect x="19" y="14" width="1" height="1" fill="#c27c54"/><rect x="21" y="14" width="1" height="1" fill="#e6bc9c"/><rect x="22" y="14" width="1" height="1" fill="#e6bc9c"/><rect x="23" y="14" width="1" height="1" fill="#f2dcc4"/><rect x="24" y="14" width="1" height="1" fill="#d8a07c"/><rect x="25" y="14" width="1" height="1" fill="#ebcaac"/><rect x="26" y="14" width="1" height="1" fill="#e6bc9c"/><rect x="27" y="14" width="1" height="1" fill="#f2dcc4"/><rect x="28" y="14" width="1" height="1" fill="#e6bc9c"/><rect x="31" y="14" width="1" height="1" fill="#c27c54"/><rect x="32" y="14" width="1" height="1" fill="#ebcaac"/><rect x="33" y="14" width="1" height="1" fill="#c27c54"/><rect x="34" y="14" width="1" height="1" fill="#b87250"/><rect x="37" y="14" width="1" height="1" fill="#c27c54"/><rect x="38" y="14" width="1" height="1" fill="#d8a07c"/><rect x="39" y="14" width="1" height="1" fill="#f2dcc4"/><rect x="41" y="14" width="1" height="1" fill="#b87250"/><rect x="42" y="14" width="1" height="1" fill="#ebcaac"/><rect x="43" y="14" width="1" height="1" fill="#e6bc9c"/><rect x="46" y="14" width="1" height="1" fill="#ebcaac"/><rect x="48" y="14" width="1" height="1" fill="#cc8c64"/><rect x="49" y="14" width="1" height="1" fill="#d8a07c"/><rect x="51" y="14" width="1" height="1" fill="#d8a07c"/><rect x="52" y="14" width="1" height="1" fill="#d8a07c"/><rect x="55" y="14" width="1" height="1" fill="#e6bc9c"/><rect x="57" y="14" width="1" height="1" fill="#f2dcc4"/><rect x="59" y="14" width="1" height="1" fill="#ebcaac"/><rect x="60" y="14" width="1" height="1" fill="#f2dcc4"/><rect x="61" y="14" width="1" height="1" fill="#b87250"/><rect x="0" y="15" width="1" height="1" fill="#c27c54"/><rect x="1" y="15" width="1" height="1" fill="#d8a07c"/><rect x="2" y="15" width="1" height="1" fill="#c27c54"/><rect x="3" y="15" width="1" height="1" fill="#d8a07c"/><rect x="4" y="15" width="1" height="1" fill="#f2dcc4"/><rect x="5" y="15" width="1" height="1" fill="#cc8c64"/><rect x="8" y="15" width="1" height="1" fill="#cc8c64"/><rect x="14" y="15" width="1" height="1" fill="#c27c54"/><rect x="18" y="15" width="1" height="1" fill="#cc8c64"/><rect x="19" y="15" width="1" height="1" fill="#d8a07c"/><rect x="21" y="15" width="1" height="1" fill="#f2dcc4"/><rect x="22" y="15" width="1" height="1" fill="#ebcaac"/><rect x="23" y="15" width="1" height="1" fill="#b87250"/><rect x="24" y="15" width="1" height="1" fill="#e6bc9c"/><rect x="25" y="15" width="1" height="1" fill="#cc8c64"/><rect x="26" y="15" width="1" height="1" fill="#ebcaac"/><rect x="27" y="15" width="1" height="1" fill="#b87250"/><rect x="28" y="15" width="1" height="1" fill="#d8a07c"/><rect x="29" y="15" width="1" height="1" fill="#ebcaac"/><rect x="32" y="15" width="1" height="1" fill="#b87250"/><rect x="33" y="15" width="1" height="1" fill="#f2dcc4"/><rect x="35" y="15" width="1" height="1" fill="#b87250"/><rect x="36" y="15" width="1" height="1" fill="#cc8c64"/><rect x="38" y="15" width="1" height="1" fill="#f2dcc4"/><rect x="41" y="15" width="1" height="1" fill="#cc8c64"/><rect x="42" y="15" width="1" height="1" fill="#b87250"/><rect x="43" y="15" width="1" height="1" fill="#c27c54"/><rect x="44" y="15" width="1" height="1" fill="#cc8c64"/><rect x="45" y="15" width="1" height="1" fill="#f2dcc4"/><rect x="46" y="15" width="1" height="1" fill="#c27c54"/><rect x="48" y="15" width="1" height="1" fill="#d8a07c"/><rect x="52" y="15" width="1" height="1" fill="#c27c54"/><rect x="56" y="15" width="1" height="1" fill="#b87250"/><rect x="57" y="15" width="1" height="1" fill="#cc8c64"/><rect x="58" y="15" width="1" height="1" fill="#f2dcc4"/><rect x="59" y="15" width="1" height="1" fill="#cc8c64"/><rect x="60" y="15" width="1" height="1" fill="#e6bc9c"/><rect x="61" y="15" width="1" height="1" fill="#cc8c64"/><rect x="1" y="16" width="1" height="1" fill="#d8a07c"/><rect x="2" y="16" width="1" height="1" fill="#e6bc9c"/><rect x="3" y="16" width="1" height="1" fill="#f2dcc4"/><rect x="6" y="16" width="1" height="1" fill="#e6bc9c"/><rect x="7" y="16" width="1" height="1" fill="#c27c54"/><rect x="10" y="16" width="1" height="1" fill="#cc8c64"/><rect x="11" y="16" width="1" height="1" fill="#f2dcc4"/><rect x="13" y="16" width="1" height="1" fill="#e6bc9c"/><rect x="14" y="16" width="1" height="1" fill="#b87250"/><rect x="18" y="16" width="1" height="1" fill="#cc8c64"/><rect x="22" y="16" width="1" height="1" fill="#cc8c64"/><rect x="23" y="16" width="1" height="1" fill="#b87250"/><rect x="24" y="16" width="1" height="1" fill="#f2dcc4"/><rect x="26" y="16" width="1" height="1" fill="#d8a07c"/><rect x="27" y="16" width="1" height="1" fill="#e6bc9c"/><rect x="29" y="16" width="1" height="1" fill="#ebcaac"/><rect x="30" y="16" width="1" height="1" fill="#cc8c64"/><rect x="32" y="16" width="1" height="1" fill="#cc8c64"/><rect x="39" y="16" width="1" height="1" fill="#ebcaac"/><rect x="41" y="16" width="1" height="1" fill="#c27c54"/><rect x="43" y="16" width="1" height="1" fill="#cc8c64"/><rect x="44" y="16" width="1" height="1" fill="#d8a07c"/><rect x="47" y="16" width="1" height="1" fill="#cc8c64"/><rect x="49" y="16" width="1" height="1" fill="#e6bc9c"/><rect x="54" y="16" width="1" height="1" fill="#ebcaac"/><rect x="56" y="16" width="1" height="1" fill="#ebcaac"/><rect x="57" y="16" width="1" height="1" fill="#f2dcc4"/><rect x="58" y="16" width="1" height="1" fill="#c27c54"/><rect x="60" y="16" width="1" height="1" fill="#b87250"/><rect x="0" y="17" width="1" height="1" fill="#cc8c64"/><rect x="1" y="17" width="1" height="1" fill="#d8a07c"/><rect x="2" y="17" width="1" height="1" fill="#ebcaac"/><rect x="3" y="17" width="1" height="1" fill="#d8a07c"/><rect x="4" y="17" width="1" height="1" fill="#e6bc9c"/><rect x="6" y="17" width="1" height="1" fill="#b87250"/><rect x="7" y="17" width="1" height="1" fill="#d8a07c"/><rect x="8" y="17" width="1" height="1" fill="#c27c54"/><rect x="10" y="17" width="1" height="1" fill="#f2dcc4"/><rect x="12" y="17" width="1" height="1" fill="#d8a07c"/><rect x="14" y="17" width="1" height="1" fill="#d8a07c"/><rect x="15" y="17" width="1" height="1" fill="#d8a07c"/><rect x="16" y="17" width="1" height="1" fill="#c27c54"/><rect x="18" y="17" width="1" height="1" fill="#cc8c64"/><rect x="19" y="17" width="1" height="1" fill="#f2dcc4"/><rect x="23" y="17" width="1" height="1" fill="#cc8c64"/><rect x="24" y="17" width="1" height="1" fill="#cc8c64"/><rect x="25" y="17" width="1" height="1" fill="#d8a07c"/><rect x="28" y="17" width="1" height="1" fill="#b87250"/><rect x="29" y="17" width="1" height="1" fill="#e6bc9c"/><rect x="30" y="17" width="1" height="1" fill="#c27c54"/><rect x="33" y="17" width="1" height="1" fill="#d8a07c"/><rect x="34" y="17" width="1" height="1" fill="#b87250"/><rect x="35" y="17" width="1" height="1" fill="#b87250"/><rect x="36" y="17" width="1" height="1" fill="#cc8c64"/><rect x="37" y="17" width="1" height="1" fill="#f2dcc4"/><rect x="42" y="17" width="1" height="1" fill="#b87250"/><rect x="43" y="17" width="1" height="1" fill="#e6bc9c"/><rect x="45" y="17" width="1" height="1" fill="#cc8c64"/><rect x="46" y="17" width="1" height="1" fill="#f2dcc4"/><rect x="48" y="17" width="1" height="1" fill="#b87250"/><rect x="49" y="17" width="1" height="1" fill="#e6bc9c"/><rect x="50" y="17" width="1" height="1" fill="#f2dcc4"/><rect x="51" y="17" width="1" height="1" fill="#cc8c64"/><rect x="52" y="17" width="1" height="1" fill="#f2dcc4"/><rect x="54" y="17" width="1" height="1" fill="#f2dcc4"/><rect x="56" y="17" width="1" height="1" fill="#cc8c64"/><rect x="60" y="17" width="1" height="1" fill="#ebcaac"/><rect x="3" y="18" width="1" height="1" fill="#f2dcc4"/><rect x="4" y="18" width="1" height="1" fill="#ebcaac"/><rect x="5" y="18" width="1" height="1" fill="#b87250"/><rect x="6" y="18" width="1" height="1" fill="#d8a07c"/><rect x="7" y="18" width="1" height="1" fill="#f2dcc4"/><rect x="10" y="18" width="1" height="1" fill="#f2dcc4"/><rect x="12" y="18" width="1" height="1" fill="#e6bc9c"/><rect x="14" y="18" width="1" height="1" fill="#b87250"/><rect x="15" y="18" width="1" height="1" fill="#d8a07c"/><rect x="16" y="18" width="1" height="1" fill="#ebcaac"/><rect x="19" y="18" width="1" height="1" fill="#f2dcc4"/><rect x="21" y="18" width="1" height="1" fill="#e6bc9c"/><rect x="22" y="18" width="1" height="1" fill="#f2dcc4"/><rect x="23" y="18" width="1" height="1" fill="#d8a07c"/><rect x="26" y="18" width="1" height="1" fill="#cc8c64"/><rect x="30" y="18" width="1" height="1" fill="#b87250"/><rect x="34" y="18" width="1" height="1" fill="#e6bc9c"/><rect x="36" y="18" width="1" height="1" fill="#cc8c64"/><rect x="39" y="18" width="1" height="1" fill="#e6bc9c"/><rect x="40" y="18" width="1" height="1" fill="#f2dcc4"/><rect x="41" y="18" width="1" height="1" fill="#ebcaac"/><rect x="42" y="18" width="1" height="1" fill="#b87250"/><rect x="44" y="18" width="1" height="1" fill="#c27c54"/><rect x="47" y="18" width="1" height="1" fill="#d8a07c"/><rect x="48" y="18" width="1" height="1" fill="#c27c54"/><rect x="49" y="18" width="1" height="1" fill="#f2dcc4"/><rect x="50" y="18" width="1" height="1" fill="#cc8c64"/><rect x="51" y="18" width="1" height="1" fill="#cc8c64"/><rect x="52" y="18" width="1" height="1" fill="#f2dcc4"/><rect x="53" y="18" width="1" height="1" fill="#ebcaac"/><rect x="55" y="18" width="1" height="1" fill="#b87250"/><rect x="57" y="18" width="1" height="1" fill="#c27c54"/><rect x="60" y="18" width="1" height="1" fill="#b87250"/><rect x="61" y="18" width="1" height="1" fill="#d8a07c"/><rect x="2" y="19" width="1" height="1" fill="#ebcaac"/><rect x="5" y="19" width="1" height="1" fill="#c27c54"/><rect x="6" y="19" width="1" height="1" fill="#c27c54"/><rect x="7" y="19" width="1" height="1" fill="#ebcaac"/><rect x="11" y="19" width="1" height="1" fill="#f2dcc4"/><rect x="12" y="19" width="1" height="1" fill="#d8a07c"/><rect x="14" y="19" width="1" height="1" fill="#c27c54"/><rect x="17" y="19" width="1" height="1" fill="#ebcaac"/><rect x="18" y="19" width="1" height="1" fill="#b87250"/><rect x="19" y="19" width="1" height="1" fill="#f2dcc4"/><rect x="21" y="19" width="1" height="1" fill="#c27c54"/><rect x="24" y="19" width="1" height="1" fill="#b87250"/><rect x="25" y="19" width="1" height="1" fill="#d8a07c"/><rect x="26" y="19" width="1" height="1" fill="#ebcaac"/><rect x="28" y="19" width="1" height="1" fill="#ebcaac"/><rect x="29" y="19" width="1" height="1" fill="#cc8c64"/><rect x="30" y="19" width="1" height="1" fill="#c27c54"/><rect x="32" y="19" width="1" height="1" fill="#c27c54"/><rect x="34" y="19" width="1" height="1" fill="#f2dcc4"/><rect x="36" y="19" width="1" height="1" fill="#e6bc9c"/><rect x="37" y="19" width="1" height="1" fill="#cc8c64"/><rect x="38" y="19" width="1" height="1" fill="#ebcaac"/><rect x="39" y="19" width="1" height="1" fill="#e6bc9c"/><rect x="40" y="19" width="1" height="1" fill="#f2dcc4"/><rect x="42" y="19" width="1" height="1" fill="#f2dcc4"/><rect x="43" y="19" width="1" height="1" fill="#c27c54"/><rect x="47" y="19" width="1" height="1" fill="#d8a07c"/><rect x="48" y="19" width="1" height="1" fill="#f2dcc4"/><rect x="49" y="19" width="1" height="1" fill="#cc8c64"/><rect x="51" y="19" width="1" height="1" fill="#d8a07c"/><rect x="52" y="19" width="1" height="1" fill="#e6bc9c"/><rect x="53" y="19" width="1" height="1" fill="#b87250"/><rect x="55" y="19" width="1" height="1" fill="#cc8c64"/><rect x="56" y="19" width="1" height="1" fill="#cc8c64"/><rect x="61" y="19" width="1" height="1" fill="#f2dcc4"/><rect x="0" y="20" width="1" height="1" fill="#b87250"/><rect x="2" y="20" width="1" height="1" fill="#b87250"/><rect x="3" y="20" width="1" height="1" fill="#cc8c64"/><rect x="8" y="20" width="1" height="1" fill="#e6bc9c"/><rect x="9" y="20" width="1" height="1" fill="#cc8c64"/><rect x="10" y="20" width="1" height="1" fill="#cc8c64"/><rect x="11" y="20" width="1" height="1" fill="#b87250"/><rect x="12" y="20" width="1" height="1" fill="#e6bc9c"/><rect x="13" y="20" width="1" height="1" fill="#b87250"/><rect x="14" y="20" width="1" height="1" fill="#cc8c64"/><rect x="17" y="20" width="1" height="1" fill="#b87250"/><rect x="18" y="20" width="1" height="1" fill="#d8a07c"/><rect x="19" y="20" width="1" height="1" fill="#c27c54"/><rect x="21" y="20" width="1" height="1" fill="#ebcaac"/><rect x="24" y="20" width="1" height="1" fill="#e6bc9c"/><rect x="26" y="20" width="1" height="1" fill="#e6bc9c"/><rect x="27" y="20" width="1" height="1" fill="#d8a07c"/><rect x="30" y="20" width="1" height="1" fill="#b87250"/><rect x="32" y="20" width="1" height="1" fill="#b87250"/><rect x="33" y="20" width="1" height="1" fill="#ebcaac"/><rect x="36" y="20" width="1" height="1" fill="#e6bc9c"/><rect x="37" y="20" width="1" height="1" fill="#d8a07c"/><rect x="40" y="20" width="1" height="1" fill="#c27c54"/><rect x="43" y="20" width="1" height="1" fill="#cc8c64"/><rect x="44" y="20" width="1" height="1" fill="#f2dcc4"/><rect x="47" y="20" width="1" height="1" fill="#d8a07c"/><rect x="48" y="20" width="1" height="1" fill="#ebcaac"/><rect x="51" y="20" width="1" height="1" fill="#b87250"/><rect x="52" y="20" width="1" height="1" fill="#cc8c64"/><rect x="54" y="20" width="1" height="1" fill="#b87250"/><rect x="56" y="20" width="1" height="1" fill="#f2dcc4"/><rect x="1" y="21" width="1" height="1" fill="#b87250"/><rect x="2" y="21" width="1" height="1" fill="#f2dcc4"/><rect x="4" y="21" width="1" height="1" fill="#ebcaac"/><rect x="5" y="21" width="1" height="1" fill="#c27c54"/><rect x="9" y="21" width="1" height="1" fill="#ebcaac"/><rect x="12" y="21" width="1" height="1" fill="#b87250"/><rect x="14" y="21" width="1" height="1" fill="#b87250"/><rect x="15" y="21" width="1" height="1" fill="#d8a07c"/><rect x="17" y="21" width="1" height="1" fill="#f2dcc4"/><rect x="18" y="21" width="1" height="1" fill="#d8a07c"/><rect x="19" y="21" width="1" height="1" fill="#e6bc9c"/><rect x="22" y="21" width="1" height="1" fill="#f2dcc4"/><rect x="24" y="21" width="1" height="1" fill="#e6bc9c"/><rect x="26" y="21" width="1" height="1" fill="#ebcaac"/><rect x="27" y="21" width="1" height="1" fill="#d8a07c"/><rect x="28" y="21" width="1" height="1" fill="#d8a07c"/><rect x="29" y="21" width="1" height="1" fill="#e6bc9c"/><rect x="30" y="21" width="1" height="1" fill="#cc8c64"/><rect x="31" y="21" width="1" height="1" fill="#c27c54"/><rect x="32" y="21" width="1" height="1" fill="#e6bc9c"/><rect x="33" y="21" width="1" height="1" fill="#e6bc9c"/><rect x="34" y="21" width="1" height="1" fill="#b87250"/><rect x="37" y="21" width="1" height="1" fill="#d8a07c"/><rect x="38" y="21" width="1" height="1" fill="#c27c54"/><rect x="39" y="21" width="1" height="1" fill="#c27c54"/><rect x="41" y="21" width="1" height="1" fill="#e6bc9c"/><rect x="44" y="21" width="1" height="1" fill="#f2dcc4"/><rect x="46" y="21" width="1" height="1" fill="#f2dcc4"/><rect x="53" y="21" width="1" height="1" fill="#c27c54"/><rect x="54" y="21" width="1" height="1" fill="#cc8c64"/><rect x="55" y="21" width="1" height="1" fill="#e6bc9c"/><rect x="57" y="21" width="1" height="1" fill="#cc8c64"/><rect x="58" y="21" width="1" height="1" fill="#f2dcc4"/><rect x="0" y="22" width="1" height="1" fill="#c27c54"/><rect x="2" y="22" width="1" height="1" fill="#b87250"/><rect x="3" y="22" width="1" height="1" fill="#f2dcc4"/><rect x="7" y="22" width="1" height="1" fill="#d8a07c"/><rect x="8" y="22" width="1" height="1" fill="#e6bc9c"/><rect x="9" y="22" width="1" height="1" fill="#b87250"/><rect x="10" y="22" width="1" height="1" fill="#d8a07c"/><rect x="11" y="22" width="1" height="1" fill="#c27c54"/><rect x="13" y="22" width="1" height="1" fill="#b87250"/><rect x="14" y="22" width="1" height="1" fill="#c27c54"/><rect x="15" y="22" width="1" height="1" fill="#d8a07c"/><rect x="21" y="22" width="1" height="1" fill="#ebcaac"/><rect x="23" y="22" width="1" height="1" fill="#c27c54"/><rect x="26" y="22" width="1" height="1" fill="#ebcaac"/><rect x="27" y="22" width="1" height="1" fill="#cc8c64"/><rect x="28" y="22" width="1" height="1" fill="#e6bc9c"/><rect x="30" y="22" width="1" height="1" fill="#e6bc9c"/><rect x="31" y="22" width="1" height="1" fill="#c27c54"/><rect x="37" y="22" width="1" height="1" fill="#c27c54"/><rect x="39" y="22" width="1" height="1" fill="#c27c54"/><rect x="42" y="22" width="1" height="1" fill="#ebcaac"/><rect x="43" y="22" width="1" height="1" fill="#b87250"/><rect x="46" y="22" width="1" height="1" fill="#b87250"/><rect x="47" y="22" width="1" height="1" fill="#ebcaac"/><rect x="48" y="22" width="1" height="1" fill="#d8a07c"/><rect x="49" y="22" width="1" height="1" fill="#ebcaac"/><rect x="53" y="22" width="1" height="1" fill="#d8a07c"/><rect x="55" y="22" width="1" height="1" fill="#d8a07c"/><rect x="56" y="22" width="1" height="1" fill="#e6bc9c"/><rect x="57" y="22" width="1" height="1" fill="#e6bc9c"/><rect x="61" y="22" width="1" height="1" fill="#c27c54"/><rect x="0" y="23" width="1" height="1" fill="#d8a07c"/><rect x="1" y="23" width="1" height="1" fill="#ebcaac"/><rect x="3" y="23" width="1" height="1" fill="#e6bc9c"/><rect x="5" y="23" width="1" height="1" fill="#ebcaac"/><rect x="6" y="23" width="1" height="1" fill="#e6bc9c"/><rect x="9" y="23" width="1" height="1" fill="#ebcaac"/><rect x="11" y="23" width="1" height="1" fill="#d8a07c"/><rect x="15" y="23" width="1" height="1" fill="#cc8c64"/><rect x="17" y="23" width="1" height="1" fill="#e6bc9c"/><rect x="18" y="23" width="1" height="1" fill="#b87250"/><rect x="20" y="23" width="1" height="1" fill="#cc8c64"/><rect x="21" y="23" width="1" height="1" fill="#ebcaac"/><rect x="22" y="23" width="1" height="1" fill="#c27c54"/><rect x="23" y="23" width="1" height="1" fill="#b87250"/><rect x="24" y="23" width="1" height="1" fill="#d8a07c"/><rect x="25" y="23" width="1" height="1" fill="#ebcaac"/><rect x="27" y="23" width="1" height="1" fill="#e6bc9c"/><rect x="29" y="23" width="1" height="1" fill="#b87250"/><rect x="31" y="23" width="1" height="1" fill="#f2dcc4"/><rect x="32" y="23" width="1" height="1" fill="#cc8c64"/><rect x="34" y="23" width="1" height="1" fill="#ebcaac"/><rect x="37" y="23" width="1" height="1" fill="#c27c54"/><rect x="38" y="23" width="1" height="1" fill="#e6bc9c"/><rect x="39" y="23" width="1" height="1" fill="#f2dcc4"/><rect x="41" y="23" width="1" height="1" fill="#cc8c64"/><rect x="43" y="23" width="1" height="1" fill="#e6bc9c"/><rect x="46" y="23" width="1" height="1" fill="#cc8c64"/><rect x="49" y="23" width="1" height="1" fill="#e6bc9c"/><rect x="51" y="23" width="1" height="1" fill="#ebcaac"/><rect x="52" y="23" width="1" height="1" fill="#c27c54"/><rect x="53" y="23" width="1" height="1" fill="#f2dcc4"/><rect x="55" y="23" width="1" height="1" fill="#ebcaac"/><rect x="56" y="23" width="1" height="1" fill="#f2dcc4"/><rect x="57" y="23" width="1" height="1" fill="#b87250"/><rect x="58" y="23" width="1" height="1" fill="#e6bc9c"/><rect x="59" y="23" width="1" height="1" fill="#c27c54"/><rect x="61" y="23" width="1" height="1" fill="#cc8c64"/><rect x="1" y="24" width="1" height="1" fill="#d8a07c"/><rect x="2" y="24" width="1" height="1" fill="#cc8c64"/><rect x="4" y="24" width="1" height="1" fill="#cc8c64"/><rect x="11" y="24" width="1" height="1" fill="#cc8c64"/><rect x="12" y="24" width="1" height="1" fill="#f2dcc4"/><rect x="13" y="24" width="1" height="1" fill="#f2dcc4"/><rect x="14" y="24" width="1" height="1" fill="#f2dcc4"/><rect x="19" y="24" width="1" height="1" fill="#d8a07c"/><rect x="20" y="24" width="1" height="1" fill="#ebcaac"/><rect x="21" y="24" width="1" height="1" fill="#e6bc9c"/><rect x="24" y="24" width="1" height="1" fill="#d8a07c"/><rect x="25" y="24" width="1" height="1" fill="#e6bc9c"/><rect x="26" y="24" width="1" height="1" fill="#f2dcc4"/><rect x="28" y="24" width="1" height="1" fill="#cc8c64"/><rect x="30" y="24" width="1" height="1" fill="#ebcaac"/><rect x="31" y="24" width="1" height="1" fill="#e6bc9c"/><rect x="34" y="24" width="1" height="1" fill="#b87250"/><rect x="35" y="24" width="1" height="1" fill="#cc8c64"/><rect x="37" y="24" width="1" height="1" fill="#c27c54"/><rect x="39" y="24" width="1" height="1" fill="#c27c54"/><rect x="40" y="24" width="1" height="1" fill="#cc8c64"/><rect x="41" y="24" width="1" height="1" fill="#cc8c64"/><rect x="42" y="24" width="1" height="1" fill="#c27c54"/><rect x="45" y="24" width="1" height="1" fill="#cc8c64"/><rect x="49" y="24" width="1" height="1" fill="#c27c54"/><rect x="50" y="24" width="1" height="1" fill="#e6bc9c"/><rect x="52" y="24" width="1" height="1" fill="#b87250"/><rect x="53" y="24" width="1" height="1" fill="#e6bc9c"/><rect x="57" y="24" width="1" height="1" fill="#c27c54"/><rect x="58" y="24" width="1" height="1" fill="#d8a07c"/><rect x="59" y="24" width="1" height="1" fill="#b87250"/><rect x="61" y="24" width="1" height="1" fill="#c27c54"/><rect x="31" y="12" width="1" height="13" fill="#333"/></svg>
<svg class="a" style="left:469px;top:207px" width="62" height="25"><rect width="62" height="25" fill="#c0c0c0"/><rect x="-26.90" y="-27.80" width="13.70" height="13.70" fill="#6e6e6e"/><rect x="0.50" y="-27.80" width="13.70" height="13.70" fill="#6e6e6e"/><rect x="27.90" y="-27.80" width="13.70" height="13.70" fill="#6e6e6e"/><rect x="55.30" y="-27.80" width="13.70" height="13.70" fill="#6e6e6e"/><rect x="82.70" y="-27.80" width="13.70" height="13.70" fill="#6e6e6e"/><rect x="-13.20" y="-14.10" width="13.70" height="13.70" fill="#6e6e6e"/><rect x="14.20" y="-14.10" width="13.70" height="13.70" fill="#6e6e6e"/><rect x="41.60" y="-14.10" width="13.70" height="13.70" fill="#6e6e6e"/><rect x="69.00" y="-14.10" width="13.70" height="13.70" fill="#6e6e6e"/><rect x="-26.90" y="-0.40" width="13.70" height="13.70" fill="#6e6e6e"/><rect x="0.50" y="-0.40" width="13.70" height="13.70" fill="#6e6e6e"/><rect x="27.90" y="-0.40" width="13.70" height="13.70" fill="#6e6e6e"/><rect x="55.30" y="-0.40" width="13.70" height="13.70" fill="#6e6e6e"/><rect x="82.70" y="-0.40" width="13.70" height="13.70" fill="#6e6e6e"/><rect x="-13.20" y="13.30" width="13.70" height="13.70" fill="#6e6e6e"/><rect x="14.20" y="13.30" width="13.70" height="13.70" fill="#6e6e6e"/><rect x="41.60" y="13.30" width="13.70" height="13.70" fill="#6e6e6e"/><rect x="69.00" y="13.30" width="13.70" height="13.70" fill="#6e6e6e"/><rect x="-26.90" y="27.00" width="13.70" height="13.70" fill="#6e6e6e"/><rect x="0.50" y="27.00" width="13.70" height="13.70" fill="#6e6e6e"/><rect x="27.90" y="27.00" width="13.70" height="13.70" fill="#6e6e6e"/><rect x="55.30" y="27.00" width="13.70" height="13.70" fill="#6e6e6e"/><rect x="82.70" y="27.00" width="13.70" height="13.70" fill="#6e6e6e"/><rect x="-13.20" y="40.70" width="13.70" height="13.70" fill="#6e6e6e"/><rect x="14.20" y="40.70" width="13.70" height="13.70" fill="#6e6e6e"/><rect x="41.60" y="40.70" width="13.70" height="13.70" fill="#6e6e6e"/><rect x="69.00" y="40.70" width="13.70" height="13.70" fill="#6e6e6e"/><rect x="-26.90" y="54.40" width="13.70" height="13.70" fill="#6e6e6e"/><rect x="0.50" y="54.40" width="13.70" height="13.70" fill="#6e6e6e"/><rect x="27.90" y="54.40" width="13.70" height="13.70" fill="#6e6e6e"/><rect x="55.30" y="54.40" width="13.70" height="13.70" fill="#6e6e6e"/><rect x="82.70" y="54.40" width="13.70" height="13.70" fill="#6e6e6e"/></svg>
<div class="a" style="left:58px;top:205px;width:1px;height:30px;background:#dcdcdc;"></div>
<div class="a" style="left:121px;top:205px;width:1px;height:30px;background:#dcdcdc;"></div>
<div class="a" style="left:183px;top:205px;width:1px;height:30px;background:#dcdcdc;"></div>
<div class="a" style="left:232px;top:205px;width:1px;height:30px;background:#dcdcdc;"></div>
<div class="a" style="left:332px;top:205px;width:1px;height:30px;background:#dcdcdc;"></div>
<div class="a" style="left:399px;top:205px;width:1px;height:30px;background:#dcdcdc;"></div>
<div class="a" style="left:466px;top:205px;width:1px;height:30px;background:#dcdcdc;"></div>
<div class="a" style="left:533px;top:205px;width:1px;height:30px;background:#dcdcdc;"></div>
<div class="a" style="left:595px;top:205px;width:1px;height:30px;background:#dcdcdc;"></div>
<div class="a" style="left:662px;top:205px;width:1px;height:30px;background:#dcdcdc;"></div>
<div class="a" style="left:11px;top:234px;width:758px;height:1px;background:#dcdcdc;"></div>
<div class="a" style="left:11px;top:235px;width:757px;height:19px;background:#c8c8c8;"></div>
<div class="t " style="left:14.53px;top:238px;transform:scaleX(0.9672);">Main Layers</div>
<div class="a" style="left:596px;top:254px;width:66px;height:29px;background:#e8e8e8;"></div>
<div class="t " style="left:31.70px;top:262px;">4</div>
<div class="a" style="left:60px;top:255px;width:60px;height:27px;background:#000;"></div>
<div class="a" style="left:128px;top:268px;width:50px;height:1px;background:#000;"></div>
<div class="t " style="left:201.70px;top:262px;">35</div>
<div class="t " style="left:236.22px;top:262px;transform:scaleX(0.9786);">Fir Framing 2</div>
<div class="t " style="left:537.59px;top:262px;transform:scaleX(1.0100);">5 1/2"</div>
<div class="t " style="left:666.29px;top:262px;transform:scaleX(1.0054);">Default</div>
<div class="a" style="left:334px;top:255px;width:64px;height:27px;background:#000;"></div>
<div class="a" style="left:401px;top:255px;width:64px;height:27px;background:#000;"></div>
<div class="a" style="left:468px;top:255px;width:64px;height:27px;background:#000;"></div>
<div class="a" style="left:335px;top:256px;width:62px;height:25px;background:#f0d4b4;"></div>
<svg class="a" style="left:402px;top:256px" width="62" height="25"><rect width="62" height="25" fill="#f1dcc0"/><rect x="0" y="0" width="2" height="25" fill="#eed8bc"/><rect x="3" y="0" width="2" height="25" fill="#ecd5b8"/><rect x="6" y="0" width="2" height="25" fill="#f3e0c6"/><rect x="9" y="0" width="2" height="25" fill="#f3e0c6"/><rect x="12" y="0" width="2" height="25" fill="#f3e0c6"/><rect x="15" y="0" width="2" height="25" fill="#f0dabe"/><rect x="18" y="0" width="2" height="25" fill="#f0dabe"/><rect x="21" y="0" width="2" height="25" fill="#ecd5b8"/><rect x="24" y="0" width="2" height="25" fill="#f3e0c6"/><rect x="27" y="0" width="2" height="25" fill="#f3e0c6"/><rect x="30" y="0" width="2" height="25" fill="#eed8bc"/><rect x="33" y="0" width="2" height="25" fill="#f3e0c6"/><rect x="36" y="0" width="2" height="25" fill="#f3e0c6"/><rect x="39" y="0" width="2" height="25" fill="#f0dabe"/><rect x="42" y="0" width="2" height="25" fill="#ecd5b8"/><rect x="45" y="0" width="2" height="25" fill="#f0dabe"/><rect x="48" y="0" width="2" height="25" fill="#f0dabe"/><rect x="51" y="0" width="2" height="25" fill="#f0dabe"/><rect x="54" y="0" width="2" height="25" fill="#ecd5b8"/><rect x="57" y="0" width="2" height="25" fill="#f0dabe"/><rect x="60" y="0" width="2" height="25" fill="#f0dabe"/></svg>
<div class="a" style="left:469px;top:256px;width:62px;height:25px;background:#9b9b9b;"></div>
<div class="a" style="left:58px;top:254px;width:1px;height:30px;background:#dcdcdc;"></div>
<div class="a" style="left:121px;top:254px;width:1px;height:30px;background:#dcdcdc;"></div>
<div class="a" style="left:183px;top:254px;width:1px;height:30px;background:#dcdcdc;"></div>
<div class="a" style="left:232px;top:254px;width:1px;height:30px;background:#dcdcdc;"></div>
<div class="a" style="left:332px;top:254px;width:1px;height:30px;background:#dcdcdc;"></div>
<div class="a" style="left:399px;top:254px;width:1px;height:30px;background:#dcdcdc;"></div>
<div class="a" style="left:466px;top:254px;width:1px;height:30px;background:#dcdcdc;"></div>
<div class="a" style="left:533px;top:254px;width:1px;height:30px;background:#dcdcdc;"></div>
<div class="a" style="left:595px;top:254px;width:1px;height:30px;background:#dcdcdc;"></div>
<div class="a" style="left:662px;top:254px;width:1px;height:30px;background:#dcdcdc;"></div>
<div class="a" style="left:11px;top:283px;width:758px;height:1px;background:#dcdcdc;"></div>
<div class="a" style="left:11px;top:284px;width:757px;height:19px;background:#c8c8c8;"></div>
<div class="t " style="left:14.54px;top:287px;transform:scaleX(0.9579);">Interior Layers</div>
<div class="a" style="left:596px;top:303px;width:66px;height:29px;background:#e8e8e8;"></div>
<div class="t " style="left:31.70px;top:311px;">5</div>
<div class="a" style="left:60px;top:304px;width:60px;height:27px;background:#000;"></div>
<div class="a" style="left:128px;top:317px;width:50px;height:1px;background:#000;"></div>
<div class="t " style="left:205.20px;top:311px;">1</div>
<div class="t " style="left:236.19px;top:311px;transform:scaleX(1.0079);">Drywall</div>
<div class="t " style="left:537.55px;top:311px;transform:scaleX(1.0500);">1/2"</div>
<div class="t " style="left:666.29px;top:311px;transform:scaleX(1.0054);">Default</div>
<div class="a" style="left:334px;top:304px;width:64px;height:27px;background:#000;"></div>
<div class="a" style="left:468px;top:304px;width:64px;height:27px;background:#000;"></div>
<div class="a" style="left:335px;top:305px;width:62px;height:25px;background:#efe8d9;"></div>
<div class="t " style="left:403.11px;top:311px;transform:scaleX(0.9930);">No Texture</div>
<svg class="a" style="left:469px;top:305px" width="62" height="25"><rect width="62" height="25" fill="#c0c0c0"/><rect x="-13.20" y="-31.10" width="13.70" height="13.70" fill="#6e6e6e"/><rect x="14.20" y="-31.10" width="13.70" height="13.70" fill="#6e6e6e"/><rect x="41.60" y="-31.10" width="13.70" height="13.70" fill="#6e6e6e"/><rect x="69.00" y="-31.10" width="13.70" height="13.70" fill="#6e6e6e"/><rect x="-26.90" y="-17.40" width="13.70" height="13.70" fill="#6e6e6e"/><rect x="0.50" y="-17.40" width="13.70" height="13.70" fill="#6e6e6e"/><rect x="27.90" y="-17.40" width="13.70" height="13.70" fill="#6e6e6e"/><rect x="55.30" y="-17.40" width="13.70" height="13.70" fill="#6e6e6e"/><rect x="82.70" y="-17.40" width="13.70" height="13.70" fill="#6e6e6e"/><rect x="-13.20" y="-3.70" width="13.70" height="13.70" fill="#6e6e6e"/><rect x="14.20" y="-3.70" width="13.70" height="13.70" fill="#6e6e6e"/><rect x="41.60" y="-3.70" width="13.70" height="13.70" fill="#6e6e6e"/><rect x="69.00" y="-3.70" width="13.70" height="13.70" fill="#6e6e6e"/><rect x="-26.90" y="10.00" width="13.70" height="13.70" fill="#6e6e6e"/><rect x="0.50" y="10.00" width="13.70" height="13.70" fill="#6e6e6e"/><rect x="27.90" y="10.00" width="13.70" height="13.70" fill="#6e6e6e"/><rect x="55.30" y="10.00" width="13.70" height="13.70" fill="#6e6e6e"/><rect x="82.70" y="10.00" width="13.70" height="13.70" fill="#6e6e6e"/><rect x="-13.20" y="23.70" width="13.70" height="13.70" fill="#6e6e6e"/><rect x="14.20" y="23.70" width="13.70" height="13.70" fill="#6e6e6e"/><rect x="41.60" y="23.70" width="13.70" height="13.70" fill="#6e6e6e"/><rect x="69.00" y="23.70" width="13.70" height="13.70" fill="#6e6e6e"/><rect x="-26.90" y="37.40" width="13.70" height="13.70" fill="#6e6e6e"/><rect x="0.50" y="37.40" width="13.70" height="13.70" fill="#6e6e6e"/><rect x="27.90" y="37.40" width="13.70" height="13.70" fill="#6e6e6e"/><rect x="55.30" y="37.40" width="13.70" height="13.70" fill="#6e6e6e"/><rect x="82.70" y="37.40" width="13.70" height="13.70" fill="#6e6e6e"/><rect x="-13.20" y="51.10" width="13.70" height="13.70" fill="#6e6e6e"/><rect x="14.20" y="51.10" width="13.70" height="13.70" fill="#6e6e6e"/><rect x="41.60" y="51.10" width="13.70" height="13.70" fill="#6e6e6e"/><rect x="69.00" y="51.10" width="13.70" height="13.70" fill="#6e6e6e"/></svg>
<div class="a" style="left:58px;top:303px;width:1px;height:30px;background:#dcdcdc;"></div>
<div class="a" style="left:121px;top:303px;width:1px;height:30px;background:#dcdcdc;"></div>
<div class="a" style="left:183px;top:303px;width:1px;height:30px;background:#dcdcdc;"></div>
<div class="a" style="left:232px;top:303px;width:1px;height:30px;background:#dcdcdc;"></div>
<div class="a" style="left:332px;top:303px;width:1px;height:30px;background:#dcdcdc;"></div>
<div class="a" style="left:399px;top:303px;width:1px;height:30px;background:#dcdcdc;"></div>
<div class="a" style="left:466px;top:303px;width:1px;height:30px;background:#dcdcdc;"></div>
<div class="a" style="left:533px;top:303px;width:1px;height:30px;background:#dcdcdc;"></div>
<div class="a" style="left:595px;top:303px;width:1px;height:30px;background:#dcdcdc;"></div>
<div class="a" style="left:662px;top:303px;width:1px;height:30px;background:#dcdcdc;"></div>
<div class="a" style="left:11px;top:332px;width:758px;height:1px;background:#dcdcdc;"></div>
<div class="a" style="left:10px;top:363px;width:864px;height:373px;background:#fff;border:1px solid #d9d9d9"></div>
<div class="a" style="left:134px;top:342px;width:107px;height:22px;background:#f0f0f0;border:1px solid #d9d9d9"></div>
<div class="a" style="left:240px;top:342px;width:102px;height:22px;background:#f0f0f0;border:1px solid #d9d9d9"></div>
<div class="a" style="left:10px;top:340px;width:125px;height:24px;background:#fff;border:1px solid #d9d9d9;border-bottom:none"></div>
<div class="t " style="left:22.11px;top:346px;transform:scaleX(0.9870);">Material Properties</div>
<div class="t " style="left:145.04px;top:347px;transform:scaleX(0.9632);">Layer Properties</div>
<div class="t " style="left:253.90px;top:347px;transform:scaleX(0.9728);">Wall Properties</div>
<div class="cb" style="left:21px;top:377px"></div>
<div class="t " style="left:39.08px;top:378px;transform:scaleX(1.0238);">Framing</div>
<div class="cbd" style="left:57px;top:403px"></div>
<div class="t dis" style="left:75.02px;top:404px;transform:scaleX(0.9787);">Use Default Framing Material</div>
<div class="cbd" style="left:57px;top:429px"></div>
<div class="t dis" style="left:75.04px;top:430px;transform:scaleX(0.9616);">Place Framing On Display Layer</div>
<div class="t dis" style="left:57.00px;top:457px;transform:scaleX(0.9393);">Type:</div>
<div class="a" style="left:252px;top:452px;width:103px;height:22px;background:#cccccc;border:1px solid #bfbfbf"></div>
<div class="t dis" style="left:256.19px;top:457px;transform:scaleX(1.0075);">Lumber</div>
<svg class="a" style="left:341px;top:460px" width="11" height="8"><path d="M1 2.2 L5 6 L9 2.2" fill="none" stroke="#a4a4a4" stroke-width="1"/></svg>
<div class="t dis" style="left:361.90px;top:457px;transform:scaleX(0.9709);">On Center</div>
<div class="cbd" style="left:457px;top:456px"></div>
<div class="t dis" style="left:474.99px;top:457px;transform:scaleX(1.0110);">Horizontal Framing</div>
<div class="t dis" style="left:57.33px;top:485px;transform:scaleX(0.9671);">Stud Spacing:</div>
<div class="tb" style="left:252px;top:480px"></div>
<div class="t dis" style="left:255.50px;top:485px;">4"</div>
<svg class="a" style="left:331px;top:483px" width="18" height="17"><path d="M3.5 0.5 L0.5 3.5 L0.5 8.5 L3.5 11 L3.5 15.5 L8.5 15.5 L8.5 11 L11.5 8.5 L11.5 3.5 L8.5 0.5 L8.5 6.5 L4.5 6.5 L4.5 0.5 Z" fill="#fff" stroke="#8c8c8c" stroke-width="1"/></svg>
<div class="t dis" style="left:57.30px;top:513px;">Stud Width:</div>
<div class="tb" style="left:252px;top:508px"></div>
<div class="t dis" style="left:254.50px;top:513px;">3/4"</div>
<svg class="a" style="left:331px;top:511px" width="18" height="17"><path d="M3.5 0.5 L0.5 3.5 L0.5 8.5 L3.5 11 L3.5 15.5 L8.5 15.5 L8.5 11 L11.5 8.5 L11.5 3.5 L8.5 0.5 L8.5 6.5 L4.5 6.5 L4.5 0.5 Z" fill="#fff" stroke="#8c8c8c" stroke-width="1"/></svg>
<div class="t dis" style="left:57.60px;top:541px;transform:scaleX(0.9795);">Top Plate Count:</div>
<div class="tb" style="left:252px;top:536px"></div>
<div class="t dis" style="left:255.50px;top:541px;">2</div>
<svg class="a" style="left:329px;top:539px" width="18" height="17"><path d="M3.5 0.5 L0.5 3.5 L0.5 8.5 L3.5 11 L3.5 15.5 L8.5 15.5 L8.5 11 L11.5 8.5 L11.5 3.5 L8.5 0.5 L8.5 6.5 L4.5 6.5 L4.5 0.5 Z" fill="#fff" stroke="#8c8c8c" stroke-width="1"/><path d="M7.5 12.5 L10 15 L15 8.5" fill="none" stroke="#f0f0f0" stroke-width="3"/><path d="M7.5 12.5 L10 15 L15 8.5" fill="none" stroke="#8c8c8c" stroke-width="1"/></svg>
<div class="t dis" style="left:57.60px;top:569px;transform:scaleX(0.9930);">Top Plate Width:</div>
<div class="tb" style="left:252px;top:564px"></div>
<div class="t dis" style="left:254.50px;top:569px;">1 1/2"</div>
<svg class="a" style="left:329px;top:567px" width="18" height="17"><path d="M3.5 0.5 L0.5 3.5 L0.5 8.5 L3.5 11 L3.5 15.5 L8.5 15.5 L8.5 11 L11.5 8.5 L11.5 3.5 L8.5 0.5 L8.5 6.5 L4.5 6.5 L4.5 0.5 Z" fill="#fff" stroke="#8c8c8c" stroke-width="1"/><path d="M7.5 12.5 L10 15 L15 8.5" fill="none" stroke="#f0f0f0" stroke-width="3"/><path d="M7.5 12.5 L10 15 L15 8.5" fill="none" stroke="#8c8c8c" stroke-width="1"/></svg>
<div class="t dis" style="left:57.28px;top:597px;transform:scaleX(1.0162);">Bottom Plate Count:</div>
<div class="tb" style="left:252px;top:592px"></div>
<div class="t dis" style="left:254.50px;top:597px;">1</div>
<svg class="a" style="left:329px;top:595px" width="18" height="17"><path d="M3.5 0.5 L0.5 3.5 L0.5 8.5 L3.5 11 L3.5 15.5 L8.5 15.5 L8.5 11 L11.5 8.5 L11.5 3.5 L8.5 0.5 L8.5 6.5 L4.5 6.5 L4.5 0.5 Z" fill="#fff" stroke="#8c8c8c" stroke-width="1"/><path d="M7.5 12.5 L10 15 L15 8.5" fill="none" stroke="#f0f0f0" stroke-width="3"/><path d="M7.5 12.5 L10 15 L15 8.5" fill="none" stroke="#8c8c8c" stroke-width="1"/></svg>
<div class="t dis" style="left:57.29px;top:625px;transform:scaleX(1.0144);">Bottom Plate Width:</div>
<div class="tb" style="left:252px;top:620px"></div>
<div class="t dis" style="left:254.50px;top:625px;">1 1/2"</div>
<svg class="a" style="left:329px;top:623px" width="18" height="17"><path d="M3.5 0.5 L0.5 3.5 L0.5 8.5 L3.5 11 L3.5 15.5 L8.5 15.5 L8.5 11 L11.5 8.5 L11.5 3.5 L8.5 0.5 L8.5 6.5 L4.5 6.5 L4.5 0.5 Z" fill="#fff" stroke="#8c8c8c" stroke-width="1"/><path d="M7.5 12.5 L10 15 L15 8.5" fill="none" stroke="#f0f0f0" stroke-width="3"/><path d="M7.5 12.5 L10 15 L15 8.5" fill="none" stroke="#8c8c8c" stroke-width="1"/></svg>
<div class="cbd" style="left:57px;top:652px"></div>
<div class="t dis" style="left:75.41px;top:653px;transform:scaleX(0.9863);">Max Plate Length:</div>
<div class="tb" style="left:252px;top:648px"></div>
<div class="t dis" style="left:254.50px;top:653px;">144"</div>
<svg class="a" style="left:331px;top:651px" width="18" height="17"><path d="M3.5 0.5 L0.5 3.5 L0.5 8.5 L3.5 11 L3.5 15.5 L8.5 15.5 L8.5 11 L11.5 8.5 L11.5 3.5 L8.5 0.5 L8.5 6.5 L4.5 6.5 L4.5 0.5 Z" fill="#fff" stroke="#8c8c8c" stroke-width="1"/></svg>
<div class="t dis" style="left:493.00px;top:485px;">Bottom Run Elevation:</div>
<div class="tb" style="left:617px;top:480px"></div>
<div class="t dis" style="left:620.50px;top:485px;">0"</div>
<div class="cbd" style="left:493px;top:512px"></div>
<div class="t dis" style="left:511.30px;top:513px;">Max Girt Length:</div>
<div class="tb" style="left:617px;top:508px"></div>
<div class="t dis" style="left:619.50px;top:513px;">144"</div>
<svg class="a" style="left:696px;top:511px" width="18" height="17"><path d="M3.5 0.5 L0.5 3.5 L0.5 8.5 L3.5 11 L3.5 15.5 L8.5 15.5 L8.5 11 L11.5 8.5 L11.5 3.5 L8.5 0.5 L8.5 6.5 L4.5 6.5 L4.5 0.5 Z" fill="#fff" stroke="#8c8c8c" stroke-width="1"/></svg>
<div class="cb" style="left:21px;top:679px"></div>
<div class="t " style="left:39.00px;top:680px;transform:scaleX(0.9899);">Auto Detail as Insulation</div>
<div class="cb" style="left:21px;top:705px"></div>
<div class="t " style="left:39.00px;top:706px;transform:scaleX(0.9625);">Air Gap</div>
</body></html>
